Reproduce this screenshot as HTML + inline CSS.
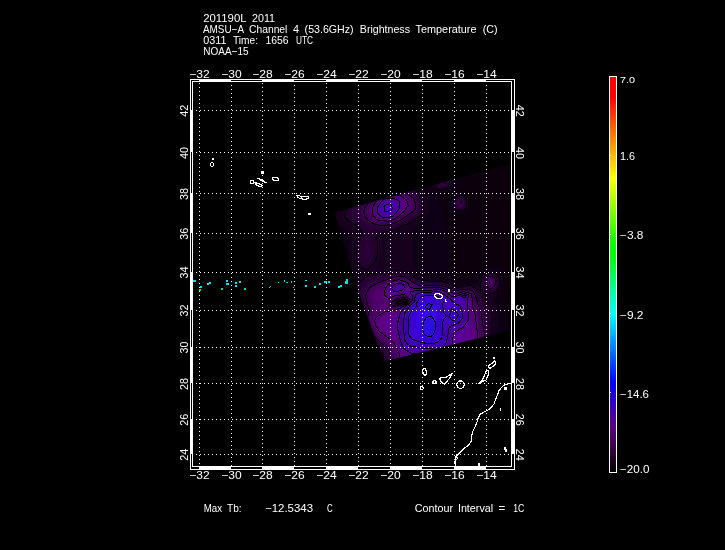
<!DOCTYPE html>
<html lang="en"><head><meta charset="utf-8"><title>AMSU-A Channel 4 Brightness Temperature</title>
<style>html,body{margin:0;padding:0;background:#000;overflow:hidden}svg{display:block;will-change:transform}text{font-family:"Liberation Sans",sans-serif;fill:#fff}</style></head><body>
<svg width="725" height="550" viewBox="0 0 725 550">
<rect width="725" height="550" fill="#000"/>
<defs><clipPath id="sw"><polygon points="510.5,163.5 510.5,330.5 383.5,361.5 357.5,288.5 334.5,212.5"/></clipPath><filter id="bl" x="-5%" y="-5%" width="110%" height="110%"><feGaussianBlur stdDeviation="1.1"/></filter></defs>
<g clip-path="url(#sw)"><g filter="url(#bl)" fill-rule="evenodd"><path fill="rgb(1,0,1)" d="M403.9 301.5L402.9 301.5ZM359.5 341.2L360.5 341.3L366.5 344.1L369.6 347.5L371.0 352.5L371.5 353.0L373.5 352.5L374.5 352.6L375.8 355.5L378.0 364.5L377.5 366.4L374.8 371.5L375.7 376.5L375.5 378.3L371.5 382.0L364.5 380.4L361.5 377.1L357.5 374.6L355.4 372.5L352.8 365.5L351.6 360.5L351.9 354.5L354.5 346.5L355.5 345.4L357.9 344.5L358.5 342.5Z"/><path fill="rgb(3,0,4)" d="M402.3 301.5L403.5 301.2L404.3 301.5ZM402.9 301.5L403.9 301.5ZM399.3 302.5L400.7 302.5ZM359.5 338.7L365.5 342.1L371.9 348.5L372.5 350.2L373.5 350.3L375.7 353.5L377.3 358.5L378.6 364.5L375.6 372.5L376.3 376.5L376.6 381.5L372.5 385.7L365.5 383.6L356.8 378.5L353.7 374.5L350.2 366.5L349.2 361.5L349.2 352.5L350.8 349.5L352.0 345.5L354.6 342.5ZM359.5 341.2L358.5 342.5L357.9 344.5L355.5 345.4L354.5 346.5L351.9 354.5L351.6 360.5L352.8 365.5L355.4 372.5L357.5 374.6L361.5 377.1L364.5 380.4L371.5 382.0L375.5 378.3L375.7 376.5L374.8 371.5L377.5 366.4L378.0 364.5L375.8 355.5L374.5 352.6L373.5 352.5L371.5 353.0L371.0 352.5L369.6 347.5L366.5 344.1L360.5 341.3Z"/><path fill="rgb(5,0,6)" d="M401.7 301.5L403.5 301.0L404.6 301.5L403.5 301.8ZM402.3 301.5L404.3 301.5L403.5 301.2ZM399.1 302.5L400.5 302.1L401.1 302.5ZM399.3 302.5L400.7 302.5ZM354.0 338.5L358.5 336.3L365.5 340.9L367.5 343.7L373.9 349.5L376.8 354.5L378.9 362.5L378.5 367.5L376.3 372.5L377.4 380.5L378.2 381.5L383.5 384.8L384.5 385.0L391.6 383.5L389.5 387.3L388.5 388.3L378.5 390.3L372.5 390.2L369.5 389.1L364.5 388.5L355.5 382.1L351.6 378.5L347.4 371.5L345.4 364.5L344.7 358.5L345.1 354.5L348.8 345.5ZM359.5 338.7L354.6 342.5L352.0 345.5L350.8 349.5L349.2 352.5L349.2 361.5L350.2 366.5L353.7 374.5L356.8 378.5L365.5 383.6L372.5 385.7L376.6 381.5L376.3 376.5L375.6 372.5L378.6 364.5L377.3 358.5L375.7 353.5L373.5 350.3L372.5 350.2L371.9 348.5L365.5 342.1Z"/><path fill="rgb(7,0,9)" d="M398.8 302.5L399.5 301.9L404.5 300.7L404.8 301.5L399.5 303.0ZM401.7 301.5L403.5 301.8L404.6 301.5L403.5 301.0ZM399.1 302.5L401.1 302.5L400.5 302.1ZM332.8 352.5L334.5 351.3L336.5 345.9L338.5 344.7L341.6 340.5L344.5 338.5L347.5 335.4L352.5 332.9L357.5 332.7L359.6 335.5L364.5 338.9L368.0 343.5L373.5 348.3L376.9 353.5L379.4 361.5L379.0 367.5L377.1 373.5L378.0 379.5L378.7 380.5L384.5 384.1L398.5 381.4L401.5 381.4L406.5 383.3L416.5 382.3L419.0 381.5L419.2 383.5L415.0 388.5L414.6 390.5L408.3 395.5L404.8 399.5L344.7 399.5L341.5 396.8L338.5 396.0L338.0 395.5L335.8 389.5L334.3 387.5L331.1 378.5L330.0 372.5L329.6 366.5L331.6 359.5ZM354.0 338.5L348.8 345.5L345.1 354.5L344.7 358.5L345.4 364.5L347.4 371.5L351.6 378.5L355.5 382.1L364.5 388.5L369.5 389.1L372.5 390.2L378.5 390.3L388.5 388.3L389.5 387.3L391.6 383.5L384.5 385.0L383.5 384.8L378.2 381.5L377.4 380.5L376.3 372.5L378.5 367.5L378.9 362.5L376.8 354.5L373.9 349.5L367.5 343.7L365.5 340.9L358.5 336.3Z"/><path fill="rgb(9,0,12)" d="M320.5 150.5L514.5 150.5L514.5 399.5L404.8 399.5L408.3 395.5L414.6 390.5L415.0 388.5L419.2 383.5L419.0 381.5L416.5 382.3L406.5 383.3L401.5 381.4L398.5 381.4L384.5 384.1L378.7 380.5L378.0 379.5L377.1 373.5L379.0 367.5L379.4 361.5L376.9 353.5L373.5 348.3L368.0 343.5L364.5 338.9L359.6 335.5L357.5 332.7L352.5 332.9L347.5 335.4L344.5 338.5L341.6 340.5L338.5 344.7L336.5 345.9L334.5 351.3L332.8 352.5L331.6 359.5L329.6 366.5L330.8 377.5L332.2 382.5L334.3 387.5L335.8 389.5L338.0 395.5L338.5 396.0L341.5 396.8L344.7 399.5L320.5 399.5ZM347.4 180.5L339.5 188.8L333.1 197.5L329.1 201.5L327.9 204.5L325.0 207.5L321.8 217.5L321.7 223.5L324.2 234.5L326.0 250.5L328.1 260.5L330.6 268.5L336.5 282.8L342.1 300.5L350.3 320.5L356.5 327.6L360.1 333.5L364.5 337.2L368.1 342.5L374.4 348.5L377.8 353.5L379.3 357.5L380.1 361.5L379.5 367.9L378.1 373.5L378.9 378.5L384.5 383.0L385.5 383.0L391.5 381.7L394.5 381.6L411.5 378.1L412.5 377.5L425.5 375.2L477.5 361.8L488.8 357.5L491.2 355.5L496.5 353.4L497.5 350.2L500.1 346.5L500.5 342.0L503.1 338.5L503.7 335.5L505.6 331.5L505.9 322.5L505.2 312.5L501.6 297.5L501.7 296.5L502.8 295.5L503.0 294.5L502.7 291.5L503.5 289.7L505.1 288.5L505.7 287.5L504.5 281.5L504.4 278.5L501.5 269.8L496.5 267.2L491.5 266.4L490.5 265.8L486.5 266.7L480.5 269.7L476.5 271.1L475.5 274.6L471.5 277.6L467.5 279.1L461.5 280.2L458.5 279.9L452.9 276.5L451.6 272.5L449.6 271.5L451.1 256.5L450.2 241.5L447.6 228.5L443.8 216.5L440.1 201.5L439.8 196.5L447.5 193.8L449.5 192.7L456.6 190.5L457.1 189.5L456.8 185.5L459.7 182.5L459.1 179.5L453.5 174.9L446.5 172.7L433.5 176.2L431.5 178.0L428.3 178.5L427.5 180.4L422.4 178.5L418.5 175.7L414.5 175.4L411.5 173.6L407.5 172.5L404.5 172.4L399.5 170.6L388.5 168.3L379.5 167.9L373.5 168.4L363.5 170.9L353.5 176.0ZM467.5 190.9L464.5 191.3L462.5 190.3L456.5 191.8L454.5 191.8L453.9 192.5L451.5 192.9L448.6 194.5L449.6 198.5L449.6 200.5L446.7 205.5L448.8 214.5L449.5 215.3L453.5 214.0L456.6 214.5L459.5 215.7L461.5 215.2L465.5 215.2L469.5 208.7L472.1 207.5L470.7 201.5L470.9 198.5L469.2 196.5ZM404.8 300.5L405.0 301.5L399.5 303.2L398.5 302.5L399.5 301.6ZM398.8 302.5L399.5 303.0L404.8 301.5L404.5 300.7L399.5 301.9Z"/><path fill="rgb(14,0,18)" d="M347.4 180.5L353.5 176.0L363.5 170.9L373.5 168.4L379.5 167.9L388.5 168.3L399.5 170.6L404.5 172.4L407.5 172.5L411.5 173.6L414.5 175.4L418.5 175.7L422.4 178.5L427.5 180.4L428.3 178.5L431.5 178.0L433.5 176.2L446.5 172.7L453.5 174.9L459.1 179.5L459.7 182.5L456.8 185.5L457.1 189.5L456.6 190.5L449.5 192.7L447.5 193.8L439.8 196.5L440.1 201.5L443.8 216.5L447.6 228.5L450.2 241.5L451.1 256.5L449.6 271.5L451.6 272.5L452.9 276.5L458.5 279.9L461.5 280.2L467.5 279.1L471.5 277.6L475.5 274.6L476.5 271.1L480.5 269.7L486.5 266.7L490.5 265.8L491.5 266.4L496.5 267.2L501.5 269.8L504.4 278.5L504.5 281.5L505.7 287.5L505.1 288.5L503.5 289.7L502.7 291.5L503.0 294.5L502.8 295.5L501.7 296.5L501.6 297.5L505.2 312.5L505.9 322.5L505.6 331.5L503.7 335.5L503.1 338.5L500.5 342.0L500.1 346.5L497.5 350.2L496.5 353.4L491.2 355.5L488.8 357.5L477.5 361.8L425.5 375.2L412.5 377.5L411.5 378.1L394.5 381.6L391.5 381.7L385.5 383.0L384.5 383.0L378.9 378.5L378.1 373.5L379.5 367.9L380.1 361.5L379.3 357.5L377.8 353.5L374.4 348.5L368.1 342.5L364.5 337.2L360.1 333.5L356.5 327.6L350.3 320.5L342.1 300.5L336.5 282.8L330.6 268.5L328.1 260.5L326.0 250.5L324.2 234.5L321.7 223.5L321.8 217.5L325.0 207.5L327.9 204.5L329.1 201.5L333.1 197.5L339.5 188.8ZM453.4 177.5L445.5 175.5L442.5 176.3L437.5 178.8L436.1 180.5L434.5 181.3L431.2 187.5L439.5 193.7L447.5 191.3L452.2 186.5L454.8 181.5L455.0 180.5ZM402.5 181.2L383.5 182.6L369.7 188.5L366.5 190.5L360.5 192.7L356.5 195.2L353.8 197.5L345.5 202.1L337.4 209.5L335.0 214.5L334.5 217.5L334.5 219.5L338.0 224.5L343.5 227.9L349.3 232.5L350.5 237.5L350.1 242.5L348.5 247.5L348.6 256.5L350.1 265.5L353.0 276.5L352.0 281.5L350.8 283.5L350.5 286.7L349.2 291.5L350.5 300.5L354.9 314.5L355.4 317.5L359.1 326.5L369.0 341.5L376.0 348.5L379.4 353.5L381.0 357.5L381.3 363.5L380.4 369.5L380.2 375.5L383.9 379.5L386.5 381.0L389.5 380.4L395.5 380.3L415.5 375.8L467.5 361.7L486.5 356.0L489.5 353.3L493.7 351.5L494.9 343.5L494.8 341.5L496.9 331.5L498.5 327.5L499.3 319.5L498.4 310.5L495.1 298.5L496.7 296.5L499.3 291.5L501.5 289.5L501.3 285.5L502.3 279.5L500.1 273.5L495.6 270.5L491.5 268.6L486.5 269.4L485.5 270.0L481.7 274.5L477.5 282.9L475.5 283.8L471.5 283.3L461.5 285.0L456.5 284.7L449.5 281.1L446.5 280.5L443.5 279.2L442.4 279.5L437.5 278.0L428.8 277.5L427.5 276.2L421.5 275.1L419.8 274.5L418.9 273.5L416.9 269.5L416.1 266.5L414.1 264.5L412.9 261.5L413.8 248.5L412.3 237.5L412.4 232.5L412.9 231.5L419.0 226.5L421.1 223.5L425.5 220.5L426.6 216.5L429.1 213.5L429.4 204.5L428.7 200.5L426.7 194.5L423.5 189.5L414.5 182.9L408.5 182.7ZM467.5 190.9L469.2 196.5L470.9 198.5L470.7 201.5L472.1 207.5L469.5 208.7L465.5 215.2L461.5 215.2L459.5 215.7L456.6 214.5L453.5 214.0L449.5 215.3L448.8 214.5L446.7 205.5L449.6 200.5L449.6 198.5L448.6 194.5L451.5 192.9L453.9 192.5L454.5 191.8L456.5 191.8L462.5 190.3L464.5 191.3ZM462.5 192.2L455.9 193.5L451.1 195.5L451.7 199.5L451.3 204.5L452.2 208.5L454.5 213.0L463.5 212.0L468.0 209.5L468.0 204.5L469.5 199.5L468.8 198.5L464.2 194.5ZM405.6 300.5L405.5 301.5L404.5 302.1L400.5 303.4L398.5 303.4L397.9 302.5L399.5 301.1L404.5 299.9ZM404.8 300.5L399.5 301.6L398.5 302.5L399.5 303.2L405.0 301.5Z"/><path fill="rgb(22,0,28)" d="M453.4 177.5L455.0 180.5L454.8 181.5L452.2 186.5L447.5 191.3L439.5 193.7L431.2 187.5L434.5 181.3L436.1 180.5L437.5 178.8L442.5 176.3L445.5 175.5ZM452.5 179.2L448.5 177.9L443.5 178.3L435.5 182.1L434.3 186.5L437.5 190.2L441.5 190.5L446.5 189.4L450.8 186.5L453.3 181.5ZM402.5 181.2L408.5 182.7L414.5 182.9L423.5 189.5L426.7 194.5L428.7 200.5L429.4 204.5L429.1 213.5L426.6 216.5L425.5 220.5L421.1 223.5L419.0 226.5L412.9 231.5L412.4 232.5L412.3 237.5L413.8 248.5L412.9 261.5L414.1 264.5L416.1 266.5L416.9 269.5L418.9 273.5L419.8 274.5L421.5 275.1L427.5 276.2L428.8 277.5L437.5 278.0L442.4 279.5L443.5 279.2L446.5 280.5L449.5 281.1L456.5 284.7L461.5 285.0L471.5 283.3L475.5 283.8L477.5 282.9L481.7 274.5L485.5 270.0L486.5 269.4L491.5 268.6L495.6 270.5L500.1 273.5L502.3 279.5L501.3 285.5L501.5 289.5L499.3 291.5L496.7 296.5L495.1 298.5L498.4 310.5L499.3 319.5L498.5 327.5L496.9 331.5L494.8 341.5L494.9 343.5L493.7 351.5L489.5 353.3L486.5 356.0L467.5 361.7L415.5 375.8L395.5 380.3L389.5 380.4L386.5 381.0L383.9 379.5L380.2 375.5L380.4 369.5L381.3 363.5L381.0 357.5L379.4 353.5L376.0 348.5L369.0 341.5L359.1 326.5L355.4 317.5L354.9 314.5L350.5 300.5L349.2 291.5L350.5 286.7L350.8 283.5L352.0 281.5L353.0 276.5L350.1 265.5L348.6 256.5L348.5 247.5L350.1 242.5L350.5 237.5L349.3 232.5L343.5 227.9L338.0 224.5L334.5 219.5L334.5 217.5L335.0 214.5L337.4 209.5L345.5 202.1L353.8 197.5L356.5 195.2L360.5 192.7L366.5 190.5L369.7 188.5L383.5 182.6ZM345.5 208.1L341.9 212.5L341.0 217.5L341.4 218.5L345.3 222.5L347.5 224.1L351.5 225.7L357.2 230.5L358.1 235.5L356.7 238.5L353.8 250.5L354.1 258.5L355.5 264.5L360.4 272.5L360.9 274.5L358.3 280.5L356.4 282.5L353.5 289.5L354.1 298.5L358.5 313.9L360.0 321.5L363.2 329.5L365.8 334.5L369.5 339.9L376.5 347.5L380.5 352.5L382.5 357.5L382.5 363.5L381.8 368.5L381.6 374.5L382.5 375.5L387.5 379.1L395.5 379.1L406.5 377.0L426.5 372.0L479.5 357.4L485.5 355.3L490.6 350.5L491.3 349.5L492.9 343.5L492.3 333.5L493.6 327.5L495.0 316.5L494.1 310.5L491.5 302.7L490.2 300.5L490.3 299.5L494.6 293.5L499.9 289.5L500.2 288.5L500.3 280.5L498.5 275.5L493.5 271.7L491.5 270.7L487.1 271.5L483.0 274.5L479.8 281.5L479.5 287.3L478.0 286.5L473.5 285.9L471.5 284.5L456.5 286.9L442.6 280.5L436.5 280.8L422.5 279.2L414.4 275.5L408.5 270.1L395.5 267.3L393.5 267.2L378.5 269.8L376.8 269.5L377.6 267.5L377.1 264.5L380.4 256.5L380.7 253.5L382.1 248.5L381.3 239.5L382.0 237.5L386.5 233.6L391.5 232.6L395.5 231.2L415.4 222.5L421.0 217.5L424.7 211.5L425.9 205.5L425.7 203.5L424.1 197.5L421.5 192.7L418.5 190.1L412.5 186.5L406.5 185.0L388.5 184.3L384.5 185.0L378.5 187.1L376.5 188.6L372.1 190.5L368.6 193.5L356.5 199.4ZM462.5 192.2L464.2 194.5L468.8 198.5L469.5 199.5L468.0 204.5L468.0 209.5L463.5 212.0L454.5 213.0L452.2 208.5L451.3 204.5L451.7 199.5L451.1 195.5L455.9 193.5ZM461.5 193.9L457.5 194.6L453.5 197.2L453.5 199.5L452.3 204.5L453.4 208.5L455.5 211.9L463.5 210.8L466.3 209.5L467.1 208.5L466.9 204.5L467.9 199.5L462.7 195.5ZM406.1 300.5L405.5 301.8L400.5 303.8L396.3 303.5L399.5 300.6L404.5 299.5ZM405.6 300.5L404.5 299.9L399.5 301.1L397.9 302.5L398.5 303.4L400.5 303.4L404.5 302.1L405.5 301.5Z"/><path fill="rgb(30,0,38)" d="M452.5 179.2L453.3 181.5L450.8 186.5L446.5 189.4L441.5 190.5L437.5 190.2L434.3 186.5L435.5 182.1L443.5 178.3L448.5 177.9ZM451.5 180.7L447.5 178.8L443.5 179.5L436.5 183.0L435.9 185.5L436.1 186.5L437.5 188.6L438.5 188.9L441.5 188.9L446.5 187.9L450.0 185.5L451.9 181.5ZM345.5 208.1L356.5 199.4L368.6 193.5L372.1 190.5L376.5 188.6L378.5 187.1L384.5 185.0L388.5 184.3L406.5 185.0L412.5 186.5L418.5 190.1L421.5 192.7L424.1 197.5L425.7 203.5L425.9 205.5L424.7 211.5L421.0 217.5L415.4 222.5L395.5 231.2L391.5 232.6L386.5 233.6L382.0 237.5L381.3 239.5L382.1 248.5L380.7 253.5L380.4 256.5L377.1 264.5L377.6 267.5L376.8 269.5L378.5 269.8L393.5 267.2L395.5 267.3L408.5 270.1L414.4 275.5L422.5 279.2L436.5 280.8L442.6 280.5L456.5 286.9L471.5 284.5L473.5 285.9L478.0 286.5L479.5 287.3L479.8 281.5L483.0 274.5L487.1 271.5L491.5 270.7L493.5 271.7L498.5 275.5L500.3 280.5L500.2 288.5L499.9 289.5L494.6 293.5L490.3 299.5L490.2 300.5L491.5 302.7L494.1 310.5L495.0 316.5L493.6 327.5L492.3 333.5L492.9 343.5L491.3 349.5L490.6 350.5L485.5 355.3L479.5 357.4L426.5 372.0L406.5 377.0L395.5 379.1L387.5 379.1L382.5 375.5L381.6 374.5L381.8 368.5L382.5 363.5L382.5 357.5L380.5 352.5L376.5 347.5L369.5 339.9L365.8 334.5L363.2 329.5L360.0 321.5L358.5 313.9L354.1 298.5L353.5 289.5L356.4 282.5L358.3 280.5L360.9 274.5L360.4 272.5L355.5 264.5L354.1 258.5L353.8 250.5L356.7 238.5L358.1 235.5L357.2 230.5L351.5 225.7L347.5 224.1L345.3 222.5L341.4 218.5L341.0 217.5L341.9 212.5ZM416.5 191.2L411.5 188.1L400.5 186.2L393.5 186.6L386.5 186.3L384.5 186.7L379.5 188.6L373.5 192.7L366.5 196.2L355.5 203.9L348.0 210.5L346.3 215.5L346.5 216.9L350.4 220.5L356.9 224.5L359.5 227.2L361.5 228.5L364.9 233.5L359.1 244.5L357.4 252.5L357.9 258.5L359.9 263.5L361.5 265.3L363.5 266.4L367.5 266.3L371.5 263.0L373.4 260.5L375.9 253.5L376.4 247.5L374.8 238.5L374.0 236.5L375.4 234.5L376.5 234.5L381.6 231.5L390.5 230.3L395.5 228.9L402.6 225.5L405.7 223.5L415.5 219.0L420.5 214.4L422.9 210.5L423.0 205.5L422.4 201.5L420.5 196.5ZM359.1 284.5L356.4 291.5L356.5 297.5L360.8 313.5L361.2 320.5L364.2 328.5L367.9 335.5L382.1 352.5L384.0 357.5L383.8 363.5L382.9 368.5L383.2 374.5L387.5 377.6L396.5 377.9L406.5 376.1L466.5 360.3L479.5 356.5L484.5 354.5L489.8 349.5L491.1 344.5L490.3 326.5L491.2 316.5L490.2 310.5L488.3 305.5L481.5 294.8L479.9 291.5L470.5 285.8L468.5 286.2L466.5 285.8L457.5 287.6L455.5 287.5L442.5 281.5L431.5 282.1L425.5 280.8L421.5 280.7L415.5 278.3L407.5 272.8L405.7 272.5L400.5 270.4L389.5 271.9L370.5 275.9L365.5 278.6L360.5 282.8ZM492.5 272.3L487.5 273.0L483.5 275.3L481.1 282.5L481.4 290.5L486.5 293.4L490.5 292.8L492.5 293.1L498.9 288.5L499.4 280.5L497.5 275.5ZM461.5 193.9L462.7 195.5L467.9 199.5L466.9 204.5L467.1 208.5L466.3 209.5L463.5 210.8L455.5 211.9L453.4 208.5L452.3 204.5L453.5 199.5L453.5 197.2L457.5 194.6ZM455.5 197.8L454.5 199.2L453.2 203.5L454.2 207.5L456.1 210.5L463.5 209.8L465.9 208.5L466.4 200.5L465.8 199.5L460.5 195.6L458.5 196.0ZM406.6 300.5L405.5 302.2L400.5 304.2L396.5 303.9L395.6 303.5L399.5 300.1L404.5 299.1ZM406.1 300.5L404.5 299.5L399.5 300.6L396.3 303.5L400.5 303.8L405.5 301.8Z"/><path fill="rgb(38,0,48)" d="M451.5 180.7L451.9 181.5L450.0 185.5L446.5 187.9L441.5 188.9L438.5 188.9L437.5 188.6L436.1 186.5L435.9 185.5L436.5 183.0L443.5 179.5L447.5 178.8ZM449.7 181.5L447.5 180.0L444.5 180.1L437.6 183.5L437.2 185.5L438.5 187.6L446.5 186.8L448.7 185.5L450.2 182.5ZM416.5 191.2L420.5 196.5L422.4 201.5L423.0 205.5L422.9 210.5L420.5 214.4L415.5 219.0L405.7 223.5L402.6 225.5L395.5 228.9L390.5 230.3L381.6 231.5L376.5 234.5L375.4 234.5L374.0 236.5L374.8 238.5L376.4 247.5L375.9 253.5L373.4 260.5L371.5 263.0L367.5 266.3L363.5 266.4L361.5 265.3L359.9 263.5L357.9 258.5L357.4 252.5L359.1 244.5L364.9 233.5L361.5 228.5L359.5 227.2L356.9 224.5L350.4 220.5L346.5 216.9L346.3 215.5L348.0 210.5L355.5 203.9L366.5 196.2L373.5 192.7L379.5 188.6L384.5 186.7L386.5 186.3L393.5 186.6L400.5 186.2L411.5 188.1ZM421.2 204.5L420.6 201.5L418.6 196.5L414.5 192.2L411.5 189.8L399.5 187.3L385.5 188.2L380.5 190.0L375.6 192.5L372.5 195.0L368.5 197.0L361.5 202.1L353.9 208.5L351.2 214.5L351.3 215.5L355.3 219.5L368.5 228.8L369.5 228.6L374.5 229.8L390.5 228.5L395.5 226.9L401.3 223.5L414.7 217.5L418.6 213.5L421.1 209.5ZM367.5 242.0L366.1 242.5L363.6 245.5L361.9 248.5L361.2 251.5L361.8 256.5L365.5 260.5L370.5 256.5L371.3 254.5L371.9 248.5L370.7 244.5L368.5 242.2ZM460.5 195.6L465.8 199.5L466.4 200.5L465.9 208.5L463.5 209.8L456.5 210.7L454.2 207.5L453.2 203.5L454.5 199.2L455.5 197.8L458.5 196.0ZM455.5 199.4L454.0 203.5L454.5 205.7L456.5 209.0L457.5 209.4L461.5 209.1L464.5 208.2L465.1 207.5L465.4 200.5L460.5 197.1L459.5 197.2ZM359.1 284.5L360.5 282.8L365.5 278.6L370.5 275.9L389.5 271.9L400.5 270.4L405.7 272.5L407.5 272.8L415.5 278.3L421.5 280.7L425.5 280.8L431.5 282.1L442.5 281.5L455.5 287.5L457.5 287.6L466.5 285.8L468.5 286.2L470.5 285.8L479.9 291.5L481.5 294.8L488.3 305.5L490.2 310.5L491.2 316.5L490.3 326.5L491.1 344.5L489.8 349.5L484.5 354.5L479.5 356.5L466.5 360.3L406.5 376.1L396.5 377.9L387.5 377.6L383.2 374.5L382.9 368.5L383.8 363.5L384.0 357.5L382.1 352.5L367.9 335.5L364.2 328.5L361.2 320.5L360.8 313.5L356.5 297.5L356.4 291.5ZM361.5 286.0L359.0 291.5L358.8 296.5L360.0 302.5L362.9 312.5L362.5 318.5L362.8 321.5L365.5 328.5L368.8 334.5L373.2 340.5L379.8 347.5L383.7 352.5L385.4 357.5L385.3 362.5L384.2 368.5L384.5 373.5L385.1 374.5L388.3 376.5L392.5 376.9L397.5 376.6L407.5 374.9L467.5 359.1L482.5 354.3L486.3 351.5L488.9 348.5L489.4 344.5L488.0 317.5L486.9 311.5L485.1 306.5L478.5 292.6L474.5 289.7L473.5 288.3L469.5 287.1L468.5 287.4L465.5 286.6L457.5 288.2L454.5 288.1L451.9 287.5L441.5 282.6L428.5 283.1L421.5 282.0L416.0 280.5L409.5 275.9L407.5 274.0L402.9 273.5L399.5 272.3L389.5 273.7L370.5 279.1L365.8 281.5ZM492.5 272.3L497.5 275.5L499.4 280.5L498.9 288.5L492.5 293.1L490.5 292.8L486.5 293.4L481.4 290.5L481.1 282.5L483.5 275.3L487.5 273.0ZM487.5 273.9L484.5 275.6L482.3 284.5L482.5 287.5L483.0 288.5L485.5 290.4L491.5 292.0L492.5 291.9L497.7 287.5L497.8 284.5L498.6 280.5L497.5 277.2L496.5 275.8L492.5 273.2ZM407.0 300.5L405.5 302.6L400.5 304.6L396.5 304.3L394.8 303.5L399.5 299.6L404.5 298.8ZM406.6 300.5L404.5 299.1L399.5 300.1L395.6 303.5L396.5 303.9L400.5 304.2L405.5 302.2Z"/><path fill="rgb(44,0,57)" d="M449.7 181.5L450.2 182.5L448.7 185.5L446.5 186.8L438.5 187.6L437.2 185.5L437.6 183.5L444.5 180.1L447.5 180.0ZM448.9 182.5L446.5 180.9L444.5 181.1L439.5 183.7L438.6 184.5L438.6 185.5L439.5 186.4L445.5 186.1L447.5 185.0ZM421.2 204.5L421.1 209.5L418.6 213.5L414.7 217.5L401.3 223.5L395.5 226.9L390.5 228.5L374.5 229.8L369.5 228.6L368.5 228.8L355.3 219.5L351.3 215.5L351.2 214.5L353.9 208.5L361.5 202.1L368.5 197.0L372.5 195.0L375.6 192.5L380.5 190.0L385.5 188.2L399.5 187.3L411.5 189.8L414.5 192.2L418.6 196.5L420.6 201.5ZM419.4 203.5L418.5 200.3L416.5 196.5L410.5 191.0L398.5 188.4L393.5 188.4L385.5 189.4L380.5 191.1L376.5 193.1L371.5 197.3L363.5 202.7L358.3 207.5L355.7 213.5L355.9 214.5L359.2 218.5L363.6 222.5L370.3 226.5L373.5 227.4L375.5 227.3L380.5 228.2L389.5 226.9L395.5 225.1L403.4 221.5L405.5 220.1L411.5 217.5L414.5 215.6L417.5 212.5L419.4 208.5ZM460.5 197.1L465.4 200.5L465.1 207.5L463.5 208.8L457.5 209.4L456.5 209.0L455.0 206.5L454.0 203.5L455.5 199.4L459.5 197.2ZM455.5 201.1L454.9 203.5L457.5 208.1L461.5 208.1L463.8 207.5L464.2 200.5L460.5 198.1ZM367.5 242.0L368.5 242.2L370.7 244.5L371.9 248.5L371.3 254.5L370.5 256.5L365.5 260.5L361.8 256.5L361.2 251.5L361.9 248.5L363.6 245.5L366.1 242.5ZM361.5 286.0L365.8 281.5L370.5 279.1L389.5 273.7L399.5 272.3L402.9 273.5L407.5 274.0L409.5 275.9L416.0 280.5L421.5 282.0L428.5 283.1L441.5 282.6L451.9 287.5L454.5 288.1L457.5 288.2L465.5 286.6L468.5 287.4L469.5 287.1L473.5 288.3L474.5 289.7L478.5 292.6L485.1 306.5L486.9 311.5L488.0 317.5L489.4 344.5L488.9 348.5L486.3 351.5L482.5 354.3L467.5 359.1L407.5 374.9L397.5 376.6L392.5 376.9L388.3 376.5L385.1 374.5L384.5 373.5L384.2 368.5L385.3 362.5L385.4 357.5L383.7 352.5L379.8 347.5L373.2 340.5L368.8 334.5L365.5 328.5L362.8 321.5L362.5 318.5L362.9 312.5L360.0 302.5L358.8 296.5L359.0 291.5ZM362.0 289.5L360.9 293.5L360.9 296.5L364.8 311.5L364.1 317.5L364.5 322.6L366.9 328.5L372.2 337.5L384.8 351.5L386.7 356.5L386.7 362.5L385.7 368.5L385.9 373.5L388.5 375.1L393.5 375.8L407.5 373.9L424.5 369.8L466.8 358.5L477.5 355.3L481.7 353.5L485.5 350.5L487.8 347.5L488.1 344.5L486.6 323.5L485.0 312.5L483.4 307.5L478.1 295.5L476.3 292.5L473.5 289.3L465.5 287.4L457.5 288.8L452.5 288.6L445.5 285.1L441.5 283.7L427.5 283.9L422.5 283.6L415.5 281.6L409.4 277.5L406.5 274.7L397.5 274.2L390.5 275.3L370.5 281.5L366.5 284.0L363.7 286.5ZM492.5 273.2L496.5 275.8L497.5 277.2L498.6 280.5L497.8 284.5L497.7 287.5L492.5 291.9L491.5 292.0L485.5 290.4L483.0 288.5L482.5 287.5L482.3 284.5L484.5 275.6L487.5 273.9ZM492.5 274.1L487.5 274.8L485.0 276.5L483.7 284.5L483.9 285.5L486.5 289.4L491.5 291.1L496.1 287.5L497.8 281.5L497.2 278.5L496.0 276.5ZM407.4 300.5L405.5 302.9L402.5 303.9L400.5 305.0L395.5 304.6L394.5 304.9L393.7 304.5L393.5 303.8L398.5 299.5L404.5 298.4ZM407.0 300.5L404.5 298.8L399.5 299.6L394.8 303.5L396.5 304.3L400.5 304.6L405.5 302.6Z"/><path fill="rgb(51,0,67)" d="M448.9 182.5L447.5 185.0L445.5 186.1L439.5 186.4L438.6 185.5L438.6 184.5L439.5 183.7L444.5 181.1L446.5 180.9ZM447.1 182.5L445.5 181.9L444.5 182.1L440.4 184.5L441.5 185.1L445.5 185.1L446.6 184.5L447.2 183.5ZM419.4 203.5L419.4 208.5L417.5 212.5L414.5 215.6L411.5 217.5L405.5 220.1L403.4 221.5L395.5 225.1L389.5 226.9L380.5 228.2L375.5 227.3L373.5 227.4L370.3 226.5L363.6 222.5L359.2 218.5L355.9 214.5L355.7 213.5L358.3 207.5L363.5 202.7L371.5 197.3L376.5 193.1L380.5 191.1L385.5 189.4L393.5 188.4L398.5 188.4L410.5 191.0L416.5 196.5L418.5 200.3ZM417.2 201.5L415.3 197.5L409.5 192.2L397.5 189.6L393.5 189.3L385.5 190.2L377.5 193.4L371.5 198.7L367.5 201.4L362.3 206.5L359.6 212.5L359.7 213.5L362.0 217.5L366.1 221.5L373.5 225.6L381.5 227.0L389.5 225.9L394.5 224.5L402.5 220.7L404.5 219.1L410.5 216.2L414.5 213.5L416.5 211.4L417.5 208.5L417.7 203.5ZM460.5 198.1L464.2 200.5L463.8 207.5L461.5 208.1L457.5 208.1L455.2 204.5L455.1 202.5L455.5 201.1ZM456.0 202.5L456.5 204.5L460.5 206.6L462.5 206.9L463.0 206.5L463.2 201.5L461.5 199.8L460.5 199.4ZM362.0 289.5L363.7 286.5L366.5 284.0L370.5 281.5L390.5 275.3L397.5 274.2L406.5 274.7L409.4 277.5L415.5 281.6L422.5 283.6L427.5 283.9L441.5 283.7L445.5 285.1L452.5 288.6L457.5 288.8L465.5 287.4L473.5 289.3L476.3 292.5L478.1 295.5L483.4 307.5L485.0 312.5L486.6 323.5L488.1 344.5L487.8 347.5L485.5 350.5L481.7 353.5L477.5 355.3L466.8 358.5L424.5 369.8L407.5 373.9L393.5 375.8L388.5 375.1L385.9 373.5L385.7 368.5L386.7 362.5L386.7 356.5L384.8 351.5L372.2 337.5L366.9 328.5L364.5 322.6L364.1 317.5L364.8 311.5L360.9 296.5L360.9 293.5ZM364.4 289.5L362.9 295.5L363.9 301.5L366.9 311.5L365.6 317.5L366.2 323.5L370.3 332.5L373.6 337.5L376.5 341.0L382.5 346.5L386.6 351.5L388.3 356.5L388.2 361.5L387.2 367.5L387.7 372.5L389.5 374.1L394.5 374.7L408.5 372.8L423.5 369.2L465.5 358.0L476.5 354.7L480.5 352.9L486.5 347.5L486.9 345.5L486.6 339.5L484.4 318.5L483.4 313.5L481.5 307.5L475.0 292.5L472.5 289.5L468.5 289.2L464.5 288.2L457.5 289.5L452.5 289.3L445.5 285.7L440.5 284.6L433.5 284.3L424.5 284.8L421.0 284.5L416.5 283.2L410.5 279.5L406.5 275.9L401.5 275.1L393.5 276.2L372.5 282.9L365.6 287.5ZM492.5 274.1L496.0 276.5L497.2 278.5L497.8 281.5L496.1 287.5L491.5 291.1L486.5 289.4L483.9 285.5L483.7 284.5L485.0 276.5L487.5 274.8ZM489.5 275.2L486.1 276.5L485.5 278.5L484.8 284.5L486.9 288.5L491.5 290.1L495.6 286.5L497.2 281.5L496.3 278.5L493.6 275.5L492.5 275.1ZM407.7 300.5L405.5 303.2L402.5 304.2L400.5 305.5L396.5 305.1L393.5 305.7L392.6 304.5L392.6 303.5L393.5 302.5L396.5 300.8L398.5 298.9L404.5 298.1ZM407.4 300.5L404.5 298.4L398.5 299.5L393.5 303.8L393.7 304.5L394.5 304.9L395.5 304.6L400.5 305.0L402.5 303.9L405.5 302.9Z"/><path fill="rgb(58,0,76)" d="M447.1 182.5L447.2 183.5L446.6 184.5L445.5 185.1L441.5 185.1L440.4 184.5L444.5 182.1L445.5 181.9ZM443.9 183.5L445.5 184.0L446.0 183.5L445.5 183.0ZM417.2 201.5L417.7 203.5L417.5 208.5L416.5 211.4L414.5 213.5L410.5 216.2L404.5 219.1L402.5 220.7L394.5 224.5L389.5 225.9L381.5 227.0L373.5 225.6L366.1 221.5L362.0 217.5L359.7 213.5L359.6 212.5L362.3 206.5L367.5 201.4L371.5 198.7L377.5 193.4L385.5 190.2L393.5 189.3L397.5 189.6L409.5 192.2L415.3 197.5ZM413.5 197.5L408.6 193.5L401.5 191.3L393.5 190.4L385.5 191.1L378.5 193.9L371.5 200.2L369.3 201.5L364.3 207.5L363.0 211.5L363.1 212.5L364.7 216.5L368.5 221.3L373.5 224.4L381.5 225.9L389.5 225.1L394.5 223.6L401.5 220.0L404.5 217.7L408.9 215.5L415.4 210.5L416.0 208.5L416.0 202.5ZM456.0 202.5L460.5 199.4L461.5 199.8L463.2 201.5L463.0 206.5L462.5 206.9L460.5 206.6L456.5 204.5ZM460.5 200.9L458.8 202.5L461.5 203.9L462.1 201.5L461.5 200.8ZM364.4 289.5L365.6 287.5L372.5 282.9L393.5 276.2L401.5 275.1L406.5 275.9L410.5 279.5L416.5 283.2L421.0 284.5L424.5 284.8L433.5 284.3L440.5 284.6L445.5 285.7L452.5 289.3L457.5 289.5L464.5 288.2L468.5 289.2L472.5 289.5L475.0 292.5L481.5 307.5L483.4 313.5L484.4 318.5L486.6 339.5L486.9 345.5L486.5 347.5L480.5 352.9L476.5 354.7L465.5 358.0L423.5 369.2L408.5 372.8L394.5 374.7L389.5 374.1L387.7 372.5L387.2 367.5L388.2 361.5L388.3 356.5L386.6 351.5L382.5 346.5L376.5 341.0L373.6 337.5L370.3 332.5L366.2 323.5L365.6 317.5L366.9 311.5L363.9 301.5L362.9 295.5ZM365.0 295.5L365.7 300.5L368.8 310.5L367.3 316.5L367.5 323.3L370.6 330.5L375.0 337.5L384.4 346.5L388.0 350.5L389.9 355.5L389.9 361.5L388.7 367.5L389.6 372.5L390.5 373.0L395.5 373.6L409.5 371.7L464.5 357.4L475.5 354.1L480.5 351.7L485.5 346.5L485.4 339.5L481.6 313.5L474.7 293.5L472.5 290.2L464.5 288.9L457.5 290.1L452.5 289.9L445.5 286.3L434.5 285.0L420.2 285.5L417.5 284.8L413.3 282.5L405.5 276.5L401.5 275.8L393.5 277.1L384.5 280.1L382.5 281.3L372.5 285.0L367.5 288.5ZM489.5 275.2L492.5 275.1L493.6 275.5L496.3 278.5L497.2 281.5L495.6 286.5L491.5 290.1L486.9 288.5L484.8 284.5L485.5 278.5L486.1 276.5ZM488.5 276.3L486.6 277.5L485.6 284.5L487.5 287.8L491.5 289.0L495.5 285.0L496.5 281.5L496.3 280.5L493.5 276.3ZM408.0 300.5L405.5 303.6L402.5 304.5L400.5 305.8L397.2 305.5L393.5 306.5L392.5 305.9L391.7 304.5L391.7 302.5L396.5 300.1L398.5 298.3L403.5 297.5L407.3 299.5ZM407.7 300.5L404.5 298.1L398.5 298.9L396.5 300.8L393.5 302.5L392.6 303.5L392.6 304.5L393.5 305.7L396.5 305.1L400.5 305.5L402.5 304.2L405.5 303.2Z"/><path fill="rgb(65,0,86)" d="M443.9 183.5L445.5 183.0L446.0 183.5L445.5 184.0ZM416.0 202.5L416.0 208.5L415.4 210.5L408.9 215.5L404.5 217.7L401.5 220.0L394.5 223.6L389.5 225.1L381.5 225.9L373.5 224.4L368.5 221.3L364.7 216.5L363.1 212.5L363.0 211.5L364.3 207.5L369.3 201.5L371.5 200.2L378.5 193.9L385.5 191.1L393.5 190.4L401.5 191.3L408.6 193.5L413.5 197.5ZM412.6 198.5L407.8 194.5L400.5 192.0L392.5 191.3L386.5 191.8L379.2 194.5L370.1 202.5L368.5 204.5L365.5 210.5L366.9 216.5L370.4 220.5L374.5 223.5L382.5 224.8L389.5 224.2L394.5 222.7L400.1 219.5L403.5 216.9L408.2 214.5L414.1 209.5L414.7 203.5ZM460.5 200.9L461.5 200.8L462.1 201.5L461.5 203.9L458.8 202.5ZM367.5 288.5L372.5 285.0L382.5 281.3L384.5 280.1L393.5 277.1L401.5 275.8L405.5 276.5L413.3 282.5L417.5 284.8L420.2 285.5L434.5 285.0L445.5 286.3L452.5 289.9L457.5 290.1L464.5 288.9L472.5 290.2L474.7 293.5L481.6 313.5L485.4 339.5L485.5 346.5L480.5 351.7L475.5 354.1L464.5 357.4L409.5 371.7L395.5 373.6L390.5 373.0L389.6 372.5L388.7 367.5L389.9 361.5L389.9 355.5L388.0 350.5L384.4 346.5L375.0 337.5L370.6 330.5L367.5 323.3L367.3 316.5L368.8 310.5L365.7 300.5L365.0 295.5ZM368.5 291.5L367.4 294.5L367.8 298.5L371.3 310.5L369.0 315.5L368.5 322.5L370.5 327.8L375.5 336.2L385.8 345.5L389.9 350.5L391.7 355.5L391.5 362.8L390.5 366.5L391.6 371.5L392.5 372.0L395.5 372.5L409.5 370.8L465.5 356.2L474.5 353.4L479.5 351.0L484.1 346.5L484.3 340.5L481.0 317.5L478.6 308.5L475.7 300.5L475.2 296.5L474.0 293.5L472.5 291.1L464.5 289.8L457.5 290.7L452.5 290.6L445.5 286.9L439.5 286.1L428.5 285.6L417.5 286.0L411.5 282.5L408.5 279.7L405.5 277.9L400.5 276.6L393.5 277.8L390.5 279.5L385.5 281.0L382.5 282.9L372.5 287.2L369.9 289.5ZM488.5 276.3L493.5 276.3L496.3 280.5L496.5 281.5L495.5 285.0L491.5 289.0L487.5 287.8L485.6 284.5L486.6 277.5ZM488.5 277.2L487.5 277.9L486.5 284.5L487.5 286.6L490.5 288.0L491.5 287.6L494.6 284.5L495.9 281.5L495.5 280.4L493.5 277.9ZM408.3 300.5L405.5 303.8L403.3 304.5L400.5 306.2L397.5 306.1L392.5 307.3L390.8 304.5L390.8 302.5L391.5 301.6L394.2 300.5L398.5 297.8L403.5 297.0L407.8 299.5ZM408.0 300.5L407.3 299.5L403.5 297.5L398.5 298.3L396.5 300.1L391.7 302.5L391.7 304.5L392.5 305.9L393.5 306.5L397.2 305.5L400.5 305.8L402.5 304.5L405.5 303.6Z"/><path fill="rgb(71,0,94)" d="M412.6 198.5L414.7 203.5L414.1 209.5L408.2 214.5L403.5 216.9L400.1 219.5L394.5 222.7L389.5 224.2L382.5 224.8L374.5 223.5L370.4 220.5L366.9 216.5L365.5 210.5L368.5 204.5L370.1 202.5L379.2 194.5L386.5 191.8L392.5 191.3L400.5 192.0L407.8 194.5ZM411.0 198.5L405.5 194.6L400.5 192.9L392.5 192.3L386.5 192.6L381.5 194.3L376.5 198.1L370.3 204.5L367.8 210.5L368.6 215.5L372.4 220.5L375.5 222.5L382.5 223.5L388.5 223.4L394.5 221.7L403.5 215.6L406.5 214.2L412.2 209.5L412.8 208.5L413.3 203.5ZM368.5 291.5L369.9 289.5L372.5 287.2L382.5 282.9L385.5 281.0L390.5 279.5L393.5 277.8L400.5 276.6L405.5 277.9L408.5 279.7L411.5 282.5L417.5 286.0L428.5 285.6L439.5 286.1L445.5 286.9L452.5 290.6L457.5 290.7L464.5 289.8L472.5 291.1L474.0 293.5L475.2 296.5L475.7 300.5L478.6 308.5L481.0 317.5L484.3 340.5L484.1 346.5L479.5 351.0L474.5 353.4L465.5 356.2L409.5 370.8L395.5 372.5L392.5 372.0L391.6 371.5L390.5 366.5L391.5 362.8L391.7 355.5L389.9 350.5L385.8 345.5L375.5 336.2L370.5 327.8L368.5 322.5L369.0 315.5L371.3 310.5L367.8 298.5L367.4 294.5ZM370.3 293.5L369.9 294.5L370.3 299.5L374.0 309.5L370.5 316.5L369.9 322.5L371.6 327.5L374.5 332.8L382.5 341.0L385.5 342.9L388.2 345.5L391.5 349.5L393.6 355.5L392.7 366.5L394.4 370.5L395.5 371.3L401.5 371.1L412.5 369.2L465.5 355.3L475.5 351.9L479.9 349.5L482.6 346.5L483.0 340.5L479.4 316.5L477.3 308.5L474.8 301.5L474.5 296.5L473.3 293.5L471.5 291.3L463.5 290.4L458.5 291.3L453.5 291.4L451.0 290.5L446.5 287.8L439.5 286.6L428.5 286.2L416.5 286.6L410.9 283.5L407.5 280.0L404.5 278.4L400.5 277.3L393.5 278.6L390.5 280.5L386.5 281.9L383.5 284.2L373.5 289.5ZM488.5 277.2L493.5 277.9L495.5 280.4L495.9 281.5L494.6 284.5L491.5 287.6L490.5 288.0L487.5 286.6L486.5 284.5L487.5 277.9ZM488.5 278.3L487.1 283.5L487.3 284.5L488.5 286.2L490.5 287.0L494.5 283.0L495.0 281.5L494.5 280.5ZM408.3 299.5L408.6 300.5L405.5 304.1L400.5 306.5L398.5 306.4L392.5 308.1L390.1 305.5L389.9 301.5L398.5 297.2L403.5 296.5ZM408.3 300.5L407.8 299.5L403.5 297.0L398.5 297.8L394.2 300.5L391.5 301.6L390.8 302.5L390.8 304.5L392.5 307.3L397.5 306.1L400.5 306.2L403.3 304.5L405.5 303.8Z"/><path fill="rgb(77,0,103)" d="M411.0 198.5L413.3 203.5L412.8 208.5L412.2 209.5L406.5 214.2L403.5 215.6L394.5 221.7L388.5 223.4L382.5 223.5L375.5 222.5L372.4 220.5L368.6 215.5L367.8 210.5L370.3 204.5L376.5 198.1L381.5 194.3L386.5 192.6L392.5 192.3L400.5 192.9L405.5 194.6ZM409.8 199.5L404.4 195.5L399.5 193.6L391.5 193.1L386.5 193.4L381.5 195.2L376.5 199.1L372.0 204.5L369.4 210.5L370.4 215.5L374.5 220.7L375.5 221.4L379.5 222.5L388.5 222.6L393.5 221.2L405.5 213.4L410.1 209.5L411.2 207.5L411.8 204.5L411.8 203.5ZM370.3 293.5L373.5 289.5L383.5 284.2L386.5 281.9L390.5 280.5L393.5 278.6L400.5 277.3L404.5 278.4L407.5 280.0L410.9 283.5L416.5 286.6L428.5 286.2L439.5 286.6L446.5 287.8L451.0 290.5L453.5 291.4L458.5 291.3L463.5 290.4L471.5 291.3L473.3 293.5L474.5 296.5L474.8 301.5L477.3 308.5L479.4 316.5L483.0 340.5L482.6 346.5L479.9 349.5L475.5 351.9L465.5 355.3L412.5 369.2L401.5 371.1L395.5 371.3L394.4 370.5L392.7 366.5L393.6 355.5L391.5 349.5L388.2 345.5L385.5 342.9L382.5 341.0L374.5 332.8L371.6 327.5L369.9 322.5L370.5 316.5L374.0 309.5L370.3 299.5L369.9 294.5ZM374.2 292.5L373.7 298.5L376.0 304.5L378.2 308.5L374.5 313.0L372.1 317.5L371.0 321.5L372.5 326.5L376.3 332.5L381.5 338.1L389.5 344.1L393.7 349.5L395.5 354.5L395.8 357.5L394.7 365.5L396.5 369.0L397.5 370.0L401.5 370.2L410.5 368.8L446.5 359.7L472.5 352.2L479.5 348.6L480.6 347.5L481.6 341.5L478.6 319.5L476.3 309.5L474.0 302.5L473.4 295.5L471.5 292.0L463.5 290.8L457.5 292.0L453.5 292.1L450.5 290.9L446.5 288.4L440.5 287.0L429.5 286.8L415.5 287.2L410.5 284.7L407.5 280.9L400.5 278.1L393.5 279.4L387.5 282.8L382.5 287.3ZM488.5 278.3L494.5 280.5L495.0 281.5L494.5 283.0L490.5 287.0L488.5 286.2L487.3 284.5L487.1 283.5ZM489.5 280.1L488.5 280.4L487.8 283.5L488.5 285.1L490.5 285.8L493.6 282.5L492.8 281.5ZM408.9 299.5L408.9 300.5L405.5 304.4L400.5 306.9L398.5 307.1L395.5 308.3L391.5 308.8L389.5 306.3L387.8 305.5L388.6 304.5L388.9 301.5L389.5 300.7L393.5 299.1L397.5 296.7L403.5 296.0ZM408.3 299.5L403.5 296.5L398.5 297.2L389.9 301.5L390.1 305.5L392.5 308.1L398.5 306.4L400.5 306.5L405.5 304.1L408.6 300.5Z"/><path fill="rgb(83,0,112)" d="M409.8 199.5L411.8 203.5L411.8 204.5L411.2 207.5L410.1 209.5L405.5 213.4L393.5 221.2L388.5 222.6L379.5 222.5L375.5 221.4L374.5 220.7L370.4 215.5L369.4 210.5L372.0 204.5L376.5 199.1L381.5 195.2L386.5 193.4L391.5 193.1L399.5 193.6L404.4 195.5ZM408.0 199.5L402.1 195.5L399.5 194.5L391.5 193.8L386.5 194.2L381.5 196.1L376.5 200.2L373.5 203.7L370.9 209.5L371.5 214.7L375.5 220.0L379.5 221.6L388.5 221.8L393.5 220.4L397.5 218.0L401.5 214.5L406.0 211.5L409.2 207.5L410.1 204.5ZM374.2 292.5L382.5 287.3L387.5 282.8L393.5 279.4L400.5 278.1L407.5 280.9L410.5 284.7L415.5 287.2L429.5 286.8L440.5 287.0L446.5 288.4L450.5 290.9L453.5 292.1L457.5 292.0L463.5 290.8L471.5 292.0L473.4 295.5L474.0 302.5L476.3 309.5L478.6 319.5L481.6 341.5L480.6 347.5L479.5 348.6L472.5 352.2L446.5 359.7L410.5 368.8L401.5 370.2L397.5 370.0L396.5 369.0L394.7 365.5L395.8 357.5L395.5 354.5L393.7 349.5L389.5 344.1L381.5 338.1L376.3 332.5L372.5 326.5L371.0 321.5L372.1 317.5L374.5 313.0L378.2 308.5L376.0 304.5L373.7 298.5ZM380.8 291.5L379.5 297.5L382.9 301.5L386.5 301.9L388.5 300.0L392.6 298.5L395.5 296.3L403.5 295.3L409.4 299.5L409.2 300.5L406.5 303.9L401.5 307.0L395.5 309.1L391.5 309.8L389.5 308.4L385.5 308.4L380.5 310.9L375.5 315.5L373.7 318.5L372.9 321.5L374.4 326.5L377.6 331.5L380.5 335.0L390.5 342.0L395.4 348.5L397.5 354.5L397.9 358.5L397.4 364.5L398.5 366.7L400.9 368.5L404.5 368.8L411.5 367.7L445.5 359.1L470.5 351.9L474.5 350.3L478.8 347.5L480.0 341.5L477.3 320.5L476.2 314.5L473.2 303.5L472.6 299.5L472.7 295.5L471.5 292.9L463.5 291.2L457.5 292.7L453.5 292.8L450.5 291.5L446.5 288.9L440.5 287.4L423.5 287.4L416.5 288.0L413.5 287.7L409.5 285.5L408.9 283.5L406.9 281.5L399.5 278.8L393.5 280.3L385.8 285.5L384.5 288.0ZM408.9 299.5L403.5 296.0L397.5 296.7L393.5 299.1L389.5 300.7L388.9 301.5L388.6 304.5L387.8 305.5L389.5 306.3L391.5 308.8L395.5 308.3L398.5 307.1L400.5 306.9L405.5 304.4L408.9 300.5ZM489.5 280.1L492.8 281.5L493.6 282.5L490.5 285.8L488.5 285.1L487.8 283.5L488.5 280.4ZM489.5 281.3L488.6 283.5L489.5 284.6L490.5 284.4L492.0 282.5Z"/><path fill="rgb(89,0,120)" d="M408.0 199.5L410.1 204.5L409.2 207.5L406.0 211.5L401.5 214.5L397.5 218.0L393.5 220.4L388.5 221.8L379.5 221.6L375.5 220.0L371.5 214.7L370.9 209.5L373.5 203.7L376.5 200.2L381.5 196.1L386.5 194.2L391.5 193.8L399.5 194.5L402.1 195.5ZM406.5 200.3L401.5 196.5L398.5 195.2L392.5 194.6L387.5 194.8L382.5 196.5L377.3 200.5L374.1 204.5L372.2 209.5L372.7 214.5L376.5 219.2L380.5 220.9L388.5 221.0L393.5 219.6L396.9 217.5L403.8 211.5L407.5 206.6L408.0 204.5ZM380.8 291.5L384.5 288.0L385.8 285.5L393.5 280.3L399.5 278.8L406.9 281.5L408.9 283.5L409.5 285.5L413.5 287.7L416.5 288.0L423.5 287.4L440.5 287.4L446.5 288.9L450.5 291.5L453.5 292.8L457.5 292.7L463.5 291.2L471.5 292.9L472.7 295.5L472.6 299.5L473.2 303.5L476.2 314.5L477.3 320.5L480.0 341.5L478.8 347.5L474.5 350.3L470.5 351.9L445.5 359.1L411.5 367.7L404.5 368.8L400.9 368.5L398.5 366.7L397.4 364.5L397.9 358.5L397.5 354.5L395.4 348.5L390.5 342.0L380.5 335.0L377.6 331.5L374.4 326.5L372.9 321.5L373.7 318.5L375.5 315.5L380.5 310.9L385.5 308.4L389.5 308.4L391.5 309.8L395.5 309.1L401.5 307.0L406.5 303.9L409.2 300.5L409.4 299.5L403.5 295.3L395.5 296.3L392.6 298.5L388.5 300.0L386.5 301.9L382.9 301.5L379.5 297.5ZM386.5 286.5L385.2 289.5L385.5 294.5L385.9 295.5L388.5 298.1L389.5 298.3L392.5 297.0L394.5 295.4L401.5 294.9L404.5 293.7L405.2 295.5L410.1 299.5L406.5 304.2L401.5 307.4L395.5 310.2L389.5 311.0L385.5 312.2L381.5 314.0L376.5 317.8L375.0 320.5L376.0 325.5L379.5 331.3L386.5 336.8L391.5 339.9L394.5 343.3L399.3 353.5L399.7 356.5L400.6 358.5L400.3 363.5L402.5 365.7L407.5 367.2L417.3 365.5L444.5 358.5L471.5 350.5L475.4 348.5L478.4 342.5L476.7 331.5L474.9 314.5L472.4 305.5L471.6 299.5L471.6 294.5L470.5 293.1L463.5 291.6L459.5 292.5L457.5 293.5L453.5 293.5L449.5 291.6L446.5 289.5L440.5 287.8L423.5 287.9L416.5 288.6L412.5 288.1L409.1 286.5L407.9 283.5L406.5 282.1L399.5 279.5L393.5 281.1ZM492.0 282.5L490.5 284.4L489.5 284.6L488.6 283.5L489.5 281.3ZM489.5 283.6L489.5 282.9Z"/><path fill="rgb(94,0,129)" d="M406.5 200.3L408.0 204.5L407.5 206.6L403.8 211.5L396.9 217.5L393.5 219.6L388.5 221.0L380.5 220.9L376.5 219.2L372.7 214.5L372.2 209.5L374.1 204.5L377.3 200.5L382.5 196.5L387.5 194.8L392.5 194.6L398.5 195.2L401.5 196.5ZM404.8 200.5L399.4 196.5L392.5 195.3L387.5 195.6L382.5 197.3L377.4 201.5L374.7 205.5L373.6 209.5L373.9 214.5L377.5 218.5L380.5 220.1L387.5 220.3L393.5 218.7L396.5 216.8L401.3 212.5L406.1 205.5ZM386.5 286.5L393.5 281.1L399.5 279.5L406.5 282.1L407.9 283.5L409.1 286.5L412.5 288.1L416.5 288.6L423.5 287.9L440.5 287.8L446.5 289.5L449.5 291.6L453.5 293.5L457.5 293.5L459.5 292.5L463.5 291.6L470.5 293.1L471.6 294.5L471.6 299.5L472.4 305.5L474.9 314.5L476.7 331.5L478.4 342.5L475.4 348.5L471.5 350.5L444.5 358.5L417.3 365.5L407.5 367.2L402.5 365.7L400.3 363.5L400.6 358.5L399.7 356.5L399.3 353.5L394.5 343.3L391.5 339.9L386.5 336.8L379.5 331.3L376.0 325.5L375.0 320.5L376.5 317.8L381.5 314.0L385.5 312.2L389.5 311.0L395.5 310.2L401.5 307.4L406.5 304.2L410.1 299.5L405.2 295.5L404.5 293.7L401.5 294.9L394.5 295.4L392.5 297.0L389.5 298.3L388.5 298.1L385.9 295.5L385.5 294.5L385.2 289.5ZM387.5 287.4L386.7 289.5L387.3 292.5L389.5 295.9L390.5 296.3L393.5 294.6L400.5 294.3L405.5 292.1L406.6 295.5L410.5 298.5L410.7 299.5L406.5 304.6L401.5 308.2L397.5 310.2L396.5 311.7L393.5 312.1L383.5 315.7L380.4 317.5L377.7 320.5L378.2 325.5L381.6 329.5L386.5 333.7L390.5 335.7L395.5 341.0L399.0 349.5L401.1 352.5L401.5 354.3L403.4 357.5L404.5 363.0L405.5 363.5L413.5 364.4L429.2 361.5L444.5 357.7L465.5 351.5L469.5 349.8L473.8 346.5L475.5 343.5L475.4 337.5L473.7 315.5L471.2 305.5L470.7 299.5L470.9 294.5L470.5 293.9L463.5 292.0L460.5 292.7L456.5 294.3L453.5 294.3L445.5 289.6L440.5 288.2L421.5 288.4L415.5 289.2L410.5 288.6L408.3 287.5L406.5 283.1L399.5 280.3L393.5 282.0L390.5 284.2ZM489.5 282.9L489.5 283.6Z"/><path fill="rgb(97,0,138)" d="M404.8 200.5L406.1 205.5L401.3 212.5L396.5 216.8L393.5 218.7L387.5 220.3L380.5 220.1L377.5 218.5L373.9 214.5L373.6 209.5L374.7 205.5L377.4 201.5L382.5 197.3L387.5 195.6L392.5 195.3L399.4 196.5ZM403.1 200.5L397.5 196.8L392.5 196.0L387.5 196.3L382.5 198.1L377.5 202.5L375.7 205.5L374.7 208.5L375.0 213.5L375.4 214.5L379.2 218.5L381.5 219.3L387.5 219.5L393.5 217.8L395.6 216.5L400.1 212.5L403.9 206.5L404.1 205.5ZM387.5 287.4L390.5 284.2L393.5 282.0L399.5 280.3L406.5 283.1L408.3 287.5L410.5 288.6L415.5 289.2L421.5 288.4L440.5 288.2L445.5 289.6L453.5 294.3L456.5 294.3L460.5 292.7L463.5 292.0L470.5 293.9L470.9 294.5L470.7 299.5L471.2 305.5L473.7 315.5L475.4 337.5L475.5 343.5L473.8 346.5L469.5 349.8L465.5 351.5L444.5 357.7L429.2 361.5L413.5 364.4L405.5 363.5L404.5 363.0L403.4 357.5L401.5 354.3L401.1 352.5L399.0 349.5L395.5 341.0L390.5 335.7L386.5 333.7L381.6 329.5L378.2 325.5L377.7 320.5L380.4 317.5L383.5 315.7L393.5 312.1L396.5 311.7L397.5 310.2L401.5 308.2L406.5 304.6L410.7 299.5L410.5 298.5L406.6 295.5L405.5 292.1L400.5 294.3L393.5 294.6L390.5 296.3L389.5 295.9L387.3 292.5L386.7 289.5ZM388.4 288.5L388.5 290.5L390.5 293.6L391.5 294.3L400.0 293.5L402.5 292.7L406.5 290.3L407.2 294.5L410.7 297.5L411.1 298.5L410.7 300.5L406.5 304.9L402.8 307.5L401.5 309.2L398.5 310.5L396.5 313.3L386.5 317.0L383.8 318.5L382.5 320.1L381.7 323.5L381.9 324.5L384.5 328.0L391.5 332.6L396.5 338.6L397.6 342.5L400.3 348.5L402.5 351.7L405.5 354.5L406.9 356.5L407.5 358.8L409.5 361.0L410.5 361.5L414.5 361.5L423.5 360.5L442.5 357.0L447.5 355.5L450.5 353.8L467.5 347.4L471.7 344.5L472.4 342.5L471.3 332.5L471.6 327.5L472.6 322.5L472.5 316.5L472.0 312.5L470.0 305.5L469.8 299.5L470.2 294.5L469.5 294.0L463.5 292.4L460.5 293.1L456.5 295.0L453.5 295.0L445.5 290.2L440.5 288.6L420.5 289.0L415.5 289.8L409.5 289.1L407.7 288.5L406.4 284.5L405.6 283.5L399.5 281.1L393.5 282.9L391.3 284.5Z"/><path fill="rgb(95,0,146)" d="M403.1 200.5L404.1 205.5L403.9 206.5L400.1 212.5L395.6 216.5L393.5 217.8L387.5 219.5L381.5 219.3L379.2 218.5L375.4 214.5L375.0 213.5L374.7 208.5L375.7 205.5L377.5 202.5L382.5 198.1L387.5 196.3L392.5 196.0L397.5 196.8ZM397.5 198.0L393.5 196.8L387.5 197.0L382.5 198.9L379.5 201.5L376.3 206.5L375.7 208.5L376.1 213.5L381.5 218.5L387.5 218.8L393.5 217.0L398.0 213.5L402.3 206.5L401.9 201.5ZM391.3 284.5L393.5 282.9L399.5 281.1L405.6 283.5L406.4 284.5L407.7 288.5L409.5 289.1L415.5 289.8L420.5 289.0L440.5 288.6L445.5 290.2L453.5 295.0L456.5 295.0L460.5 293.1L463.5 292.4L469.5 294.0L470.2 294.5L469.8 299.5L470.0 305.5L472.0 312.5L472.5 316.5L472.6 322.5L471.6 327.5L471.3 332.5L472.4 342.5L471.7 344.5L467.5 347.4L450.5 353.8L447.5 355.5L442.5 357.0L423.5 360.5L414.5 361.5L410.5 361.5L409.5 361.0L407.5 358.8L406.9 356.5L405.5 354.5L402.5 351.7L400.3 348.5L397.6 342.5L396.5 338.6L391.5 332.6L384.5 328.0L381.9 324.5L381.7 323.5L382.5 320.1L383.8 318.5L386.5 317.0L396.5 313.3L398.5 310.5L401.5 309.2L402.8 307.5L406.5 304.9L410.7 300.5L411.1 298.5L410.7 297.5L407.2 294.5L406.5 290.3L402.5 292.7L400.0 293.5L391.5 294.3L390.5 293.6L388.5 290.5L388.4 288.5ZM389.8 288.5L391.9 292.5L392.5 292.9L395.5 293.1L398.5 292.9L402.5 291.6L406.0 289.5L406.6 288.5L405.5 284.5L399.5 281.8L394.5 283.2L392.6 284.5ZM408.5 289.9L407.9 290.5L408.3 294.5L411.5 296.7L411.5 300.5L403.6 307.5L401.5 310.2L399.1 311.5L397.5 315.2L395.5 317.6L389.0 322.5L392.6 326.5L394.5 327.5L396.3 331.5L398.9 341.5L400.9 346.5L403.1 350.5L408.5 354.7L411.5 355.7L416.5 358.6L442.5 355.6L447.5 354.0L451.5 350.9L456.0 348.5L457.0 346.5L461.4 343.5L463.5 340.5L464.8 335.5L468.5 328.1L471.1 320.5L470.7 312.5L468.9 305.5L469.0 297.5L469.6 294.5L464.5 292.7L460.6 293.5L456.5 295.6L453.5 295.7L444.5 290.2L440.5 289.0L419.5 289.5L415.5 290.4Z"/><path fill="rgb(92,0,153)" d="M401.9 201.5L402.3 206.5L398.0 213.5L393.5 217.0L387.5 218.8L381.5 218.5L376.1 213.5L375.7 208.5L376.3 206.5L379.5 201.5L382.5 198.9L387.5 197.0L393.5 196.8L397.5 198.0ZM400.5 201.5L396.5 198.7L393.5 197.6L387.5 197.8L382.5 199.7L380.5 201.5L377.3 206.5L376.8 208.5L377.2 213.5L381.5 217.4L382.5 217.7L387.5 218.0L392.8 216.5L396.7 213.5L399.4 209.5L400.6 206.5ZM405.5 284.5L406.6 288.5L406.0 289.5L402.5 291.6L398.5 292.9L392.5 292.9L389.8 288.5L392.6 284.5L394.5 283.2L399.5 281.8ZM391.2 288.5L392.9 291.5L396.5 292.4L402.5 290.5L405.1 288.5L405.2 287.5L404.3 284.5L399.5 282.7L394.5 284.1L392.5 285.6ZM408.5 289.9L415.5 290.4L419.5 289.5L440.5 289.0L444.5 290.2L453.5 295.7L456.5 295.6L460.6 293.5L464.5 292.7L469.6 294.5L469.0 297.5L468.9 305.5L470.7 312.5L471.1 320.5L468.5 328.1L464.8 335.5L463.5 340.5L461.4 343.5L457.0 346.5L456.0 348.5L451.5 350.9L447.5 354.0L442.5 355.6L416.5 358.6L411.5 355.7L408.5 354.7L403.1 350.5L400.9 346.5L398.9 341.5L396.3 331.5L394.5 327.5L392.6 326.5L389.0 322.5L395.5 317.6L397.5 315.2L399.1 311.5L401.5 310.2L403.6 307.5L411.5 300.5L411.5 296.7L408.3 294.5L407.9 290.5ZM468.8 294.5L464.5 293.0L461.5 293.6L455.5 296.6L453.5 296.4L451.5 295.7L444.2 290.5L440.5 289.4L419.5 290.0L414.5 291.1L409.4 290.5L409.5 293.5L412.1 296.5L412.0 300.5L405.3 306.5L402.2 310.5L400.5 311.5L399.3 313.5L398.5 317.9L395.8 322.5L396.6 325.5L396.5 327.5L398.5 334.0L400.1 341.5L403.5 349.1L410.5 353.8L415.5 354.4L418.5 355.6L423.5 355.3L426.5 355.9L442.5 354.2L447.5 352.3L449.7 350.5L453.6 343.5L453.4 339.5L454.5 335.5L457.9 331.5L463.6 328.5L467.4 324.5L469.3 320.5L469.6 316.5L469.2 311.5L467.8 305.5L468.0 299.5Z"/><path fill="rgb(89,0,160)" d="M400.5 201.5L400.6 206.5L399.4 209.5L396.7 213.5L392.8 216.5L387.5 218.0L382.5 217.7L381.5 217.4L377.2 213.5L376.8 208.5L377.3 206.5L380.5 201.5L382.5 199.7L387.5 197.8L393.5 197.6L396.5 198.7ZM393.5 198.6L387.5 198.6L382.6 200.5L378.3 206.5L377.9 208.5L378.5 213.5L381.5 216.1L386.5 217.3L392.5 215.9L394.3 214.5L397.6 210.5L399.2 207.5L399.1 202.5L398.6 201.5ZM391.2 288.5L392.5 285.6L394.5 284.1L399.5 282.7L404.3 284.5L405.2 287.5L405.1 288.5L402.5 290.5L396.5 292.4L392.9 291.5ZM392.4 287.5L393.5 290.3L396.5 291.2L401.5 289.5L403.9 287.5L403.5 285.5L402.7 284.5L399.5 283.5L394.5 285.0ZM468.8 294.5L468.0 299.5L467.8 305.5L469.2 311.5L469.6 316.5L469.3 320.5L467.4 324.5L463.6 328.5L457.9 331.5L454.5 335.5L453.4 339.5L453.6 343.5L449.7 350.5L447.5 352.3L442.5 354.2L426.5 355.9L423.5 355.3L418.5 355.6L415.5 354.4L410.5 353.8L403.5 349.1L400.1 341.5L398.5 334.0L396.5 327.5L396.6 325.5L395.8 322.5L398.5 317.9L399.3 313.5L400.5 311.5L402.2 310.5L405.3 306.5L412.0 300.5L412.1 296.5L409.5 293.5L409.4 290.5L414.5 291.1L419.5 290.0L440.5 289.4L444.2 290.5L451.5 295.7L453.5 296.4L455.5 296.6L461.5 293.6L464.5 293.0ZM411.0 291.5L410.9 293.5L412.8 295.5L412.6 300.5L406.0 306.5L402.5 311.3L401.0 312.5L399.4 319.5L399.3 321.5L398.4 323.5L398.7 325.5L398.2 328.5L399.6 333.5L400.2 338.5L401.0 341.5L404.4 348.5L411.5 352.3L420.5 353.1L427.5 354.4L441.5 353.1L446.5 351.3L450.8 344.5L452.3 338.5L452.9 332.5L459.5 328.2L462.5 326.8L466.5 321.8L467.8 319.5L467.8 311.5L466.4 306.5L467.2 299.5L468.3 295.5L467.9 294.5L464.5 293.4L454.5 297.3L451.5 296.6L443.3 290.5L440.5 289.8L419.5 290.5L414.5 291.7Z"/><path fill="rgb(87,0,169)" d="M398.6 201.5L399.1 202.5L399.2 207.5L397.5 210.6L393.1 215.5L387.5 217.2L385.5 217.2L381.5 216.1L378.5 213.5L377.9 207.5L382.6 200.5L387.5 198.6L391.5 198.3L393.5 198.6ZM395.5 200.8L393.5 199.9L388.5 199.3L387.2 199.5L383.1 201.5L379.0 207.5L379.2 212.5L379.9 213.5L381.5 214.6L386.5 216.4L391.0 215.5L393.0 214.5L397.0 209.5L397.9 207.5L397.7 202.5ZM392.4 287.5L394.5 285.0L399.5 283.5L402.7 284.5L403.5 285.5L403.9 287.5L401.5 289.5L396.5 291.2L393.5 290.3ZM402.4 285.5L400.5 284.3L395.4 285.5L394.0 286.5L393.4 287.5L394.5 289.2L396.5 289.5L401.5 287.8L402.7 286.5ZM411.0 291.5L414.5 291.7L419.5 290.5L440.5 289.8L443.3 290.5L451.5 296.6L454.5 297.3L464.5 293.4L467.9 294.5L468.3 295.5L467.2 299.5L466.4 306.5L467.8 311.5L467.8 319.5L466.5 321.8L462.5 326.8L459.5 328.2L452.9 332.5L452.3 338.5L450.8 344.5L446.5 351.3L441.5 353.1L427.5 354.4L420.5 353.1L411.5 352.3L404.4 348.5L401.0 341.5L400.2 338.5L399.6 333.5L398.2 328.5L398.7 325.5L398.4 323.5L399.3 321.5L399.4 319.5L401.0 312.5L402.5 311.3L406.0 306.5L412.6 300.5L412.8 295.5L410.9 293.5ZM467.5 295.0L464.5 293.7L463.5 293.9L454.5 298.1L451.5 297.3L441.5 290.3L419.5 291.0L412.3 292.5L413.3 295.5L412.7 301.5L407.8 305.5L404.5 309.5L401.8 313.5L400.4 319.5L400.5 325.5L399.7 328.5L400.6 332.5L400.8 336.5L402.0 341.5L405.3 347.5L411.6 350.5L415.5 351.5L422.5 351.9L428.5 352.9L441.5 351.8L446.5 349.6L449.3 344.5L450.9 338.5L451.4 333.5L452.5 330.4L462.0 324.5L466.3 318.5L466.6 312.5L465.0 306.5L465.6 300.5L466.5 300.1L467.8 295.5Z"/><path fill="rgb(85,0,178)" d="M395.5 200.8L397.7 202.5L397.9 207.5L397.0 209.5L393.0 214.5L391.0 215.5L386.5 216.4L381.5 214.6L379.9 213.5L379.2 212.5L379.0 207.5L383.1 201.5L387.2 199.5L388.5 199.3L393.5 199.9ZM396.1 202.5L393.5 201.3L388.5 200.6L383.5 202.7L380.8 206.5L380.4 212.5L386.5 215.1L391.5 214.0L396.3 208.5ZM402.4 285.5L402.7 286.5L401.5 287.8L396.5 289.5L394.5 289.2L393.4 287.5L394.0 286.5L395.4 285.5L400.5 284.3ZM401.3 285.5L400.5 285.0L395.5 286.3L394.8 287.5L395.5 288.0L400.5 286.6ZM467.5 295.0L467.8 295.5L466.5 300.1L465.6 300.5L465.0 306.5L466.6 312.5L466.3 318.5L462.0 324.5L452.5 330.4L451.4 333.5L450.9 338.5L449.3 344.5L446.5 349.6L441.5 351.8L428.5 352.9L422.5 351.9L415.5 351.5L411.6 350.5L405.3 347.5L402.0 341.5L400.8 336.5L400.6 332.5L399.7 328.5L400.5 325.5L400.4 319.5L401.8 313.5L404.5 309.5L407.8 305.5L412.7 301.5L413.3 295.5L412.3 292.5L419.5 291.0L441.5 290.3L451.5 297.3L454.5 298.1L463.5 293.9L464.5 293.7ZM414.5 292.9L413.9 293.5L413.4 301.5L408.5 305.5L404.6 310.5L402.9 313.5L401.5 318.5L401.6 335.5L403.0 341.5L406.1 346.5L412.5 349.2L416.5 350.3L433.5 351.5L440.5 350.8L444.2 349.5L445.7 348.5L447.7 345.5L449.4 339.5L450.3 333.5L451.6 329.5L452.5 328.4L461.5 323.5L464.7 318.5L465.3 312.5L463.7 307.5L463.7 305.5L462.8 301.5L463.6 299.5L465.5 299.5L466.4 298.5L467.3 295.5L465.5 294.4L463.5 294.3L454.5 299.2L450.5 297.6L441.5 290.8L419.5 291.4Z"/><path fill="rgb(83,0,184)" d="M396.1 202.5L396.3 208.5L391.5 214.0L386.5 215.1L380.4 212.5L380.8 206.5L383.5 202.7L388.5 200.6L393.5 201.3ZM394.5 203.0L388.5 202.0L383.5 204.4L382.1 206.5L382.5 211.8L383.3 212.5L386.5 213.6L391.5 212.4L394.6 208.5L394.9 203.5ZM401.3 285.5L400.5 286.6L395.5 288.0L394.8 287.5L395.5 286.3L400.5 285.0ZM414.5 292.9L419.5 291.4L441.5 290.8L450.5 297.6L454.5 299.2L463.5 294.3L465.5 294.4L467.3 295.5L466.4 298.5L465.5 299.5L463.6 299.5L462.8 301.5L463.7 305.5L463.7 307.5L465.3 312.5L464.7 318.5L461.5 323.5L452.5 328.4L451.6 329.5L450.3 333.5L449.4 339.5L447.7 345.5L445.7 348.5L444.2 349.5L440.5 350.8L433.5 351.5L416.5 350.3L412.5 349.2L406.1 346.5L403.0 341.5L401.6 335.5L401.5 318.5L402.9 313.5L404.6 310.5L408.5 305.5L413.4 301.5L413.9 293.5ZM466.8 295.5L464.4 294.5L458.2 297.5L455.5 301.9L453.2 299.5L450.5 298.5L441.5 291.3L436.5 291.0L432.5 291.6L420.5 292.0L415.0 293.5L414.2 295.5L413.9 301.5L409.2 305.5L404.1 312.5L402.4 318.5L402.2 321.5L402.5 335.5L403.5 340.5L406.5 345.3L412.5 348.0L417.5 349.1L425.5 349.9L434.5 350.2L440.5 349.6L445.5 347.0L446.4 345.5L448.3 339.5L449.2 333.5L451.0 327.5L460.0 323.5L463.6 318.5L464.0 312.5L460.9 303.5L459.4 302.5L461.5 298.5L462.5 298.2L465.5 298.6Z"/><path fill="rgb(81,0,189)" d="M394.5 203.0L394.9 203.5L394.6 208.5L391.5 212.4L386.5 213.6L383.3 212.5L382.5 211.8L382.1 206.5L383.5 204.4L388.5 202.0ZM392.2 204.5L389.5 203.5L384.3 205.5L383.7 206.5L384.3 211.5L386.5 212.0L390.5 211.1L391.5 210.4L392.5 208.5ZM466.8 295.5L465.5 298.6L462.5 298.2L461.5 298.5L459.4 302.5L460.9 303.5L464.0 312.5L463.6 318.5L460.0 323.5L451.0 327.5L449.2 333.5L448.3 339.5L446.4 345.5L445.5 347.0L440.5 349.6L434.5 350.2L425.5 349.9L417.5 349.1L412.5 348.0L406.5 345.3L403.5 340.5L402.5 335.5L402.2 321.5L402.4 318.5L404.1 312.5L409.2 305.5L413.9 301.5L414.2 295.5L415.0 293.5L420.5 292.0L432.5 291.6L436.5 291.0L441.5 291.3L450.5 298.5L453.2 299.5L455.5 301.9L458.2 297.5L464.4 294.5ZM459.5 304.8L456.5 304.3L455.5 303.7L451.5 299.5L449.5 298.6L441.5 292.2L439.9 291.5L420.5 292.7L416.5 293.8L415.5 294.5L415.0 295.5L414.4 301.5L413.8 302.5L410.0 305.5L404.9 312.5L403.4 318.5L403.1 322.5L403.5 334.5L404.5 340.5L407.5 344.5L411.5 346.5L423.5 348.6L434.5 349.0L440.5 348.4L444.5 346.1L445.5 344.8L447.2 339.5L449.6 326.5L452.5 325.8L458.5 323.3L460.5 321.5L462.4 318.5L463.0 313.5ZM461.0 296.5L461.5 297.1L465.5 297.7L466.2 295.5L464.5 294.9Z"/><path fill="rgb(79,0,193)" d="M392.2 204.5L392.5 208.5L391.5 210.4L390.5 211.1L386.5 212.0L384.3 211.5L383.7 206.5L384.3 205.5L389.5 203.5ZM459.5 304.8L463.0 313.5L462.4 318.5L460.5 321.5L458.5 323.3L452.5 325.8L449.6 326.5L447.2 339.5L445.5 344.8L444.5 346.1L440.5 348.4L434.5 349.0L423.5 348.6L411.5 346.5L407.5 344.5L404.5 340.5L403.5 334.5L403.1 322.5L403.4 318.5L404.9 312.5L410.0 305.5L413.8 302.5L414.4 301.5L415.0 295.5L415.5 294.5L416.5 293.8L420.5 292.7L439.9 291.5L441.5 292.2L449.5 298.6L451.5 299.5L455.5 303.7L456.5 304.3ZM458.6 306.5L456.5 306.0L454.4 304.5L450.8 300.5L442.5 293.8L438.5 292.2L435.5 291.9L422.5 293.2L417.2 294.5L415.5 296.8L414.6 302.5L411.8 304.5L407.0 310.5L405.8 312.5L404.0 322.5L404.5 334.5L405.9 340.5L408.4 343.5L411.5 345.4L423.5 347.5L429.5 348.0L438.5 347.4L440.5 347.0L444.5 344.2L446.0 340.5L448.3 325.5L450.5 324.7L453.5 324.5L457.5 322.8L460.9 319.5L462.1 313.5ZM461.0 296.5L464.5 294.9L466.2 295.5L465.5 297.7L461.5 297.1ZM462.8 296.5L465.3 296.5L465.7 295.5L464.5 295.3Z"/><path fill="rgb(77,1,199)" d="M458.6 306.5L462.1 313.5L460.9 319.5L457.5 322.8L453.5 324.5L450.5 324.7L448.3 325.5L446.0 340.5L444.5 344.2L440.5 347.0L438.5 347.4L429.5 348.0L423.5 347.5L411.5 345.4L408.4 343.5L405.9 340.5L404.5 334.5L404.0 322.5L405.8 312.5L407.0 310.5L411.8 304.5L414.6 302.5L415.5 296.8L417.2 294.5L422.5 293.2L435.5 291.9L438.5 292.2L442.5 293.8L450.8 300.5L454.4 304.5L456.5 306.0ZM458.0 308.5L452.5 304.6L450.5 302.3L449.5 301.8L448.5 302.4L448.1 299.5L442.5 294.7L439.5 293.9L437.3 292.5L435.5 292.3L422.5 293.8L417.5 295.5L415.8 298.5L415.3 302.5L412.7 304.5L412.3 305.5L409.5 308.3L407.1 311.5L406.4 313.5L405.0 322.5L405.5 334.5L407.4 340.5L408.5 341.9L411.5 344.1L423.5 346.4L432.5 346.8L438.5 346.2L440.5 345.4L444.1 342.5L445.0 340.5L446.5 325.4L447.1 324.5L449.5 323.7L453.5 323.5L456.5 322.4L457.8 321.5L460.1 318.5L461.2 313.5ZM465.7 295.5L465.3 296.5L462.8 296.5L464.5 295.3Z"/><path fill="rgb(74,2,204)" d="M458.0 308.5L461.2 313.5L460.1 318.5L457.8 321.5L456.5 322.4L453.5 323.5L449.5 323.7L447.1 324.5L446.5 325.4L445.0 340.5L444.1 342.5L440.5 345.4L438.5 346.2L432.5 346.8L423.5 346.4L411.5 344.1L408.5 341.9L407.4 340.5L405.5 334.5L405.0 322.5L406.4 313.5L407.1 311.5L409.5 308.3L412.3 305.5L412.7 304.5L415.3 302.5L415.8 298.5L417.5 295.5L422.5 293.8L435.5 292.3L437.3 292.5L439.5 293.9L442.5 294.7L448.1 299.5L448.5 302.4L449.5 301.8L450.5 302.3L452.5 304.6ZM436.5 293.3L430.3 293.5L423.5 294.4L419.5 295.5L418.5 296.2L416.5 299.5L415.8 302.5L413.9 304.5L413.5 306.1L408.1 311.5L406.1 321.5L406.0 328.5L406.6 334.5L408.2 339.5L410.5 341.8L414.7 343.5L427.5 345.8L435.5 345.4L439.5 344.4L443.8 340.5L444.8 334.5L445.1 324.5L445.5 323.8L449.5 322.3L453.5 322.3L456.5 321.4L459.0 318.5L460.1 313.5L457.1 309.5L451.5 305.4L450.0 305.5L449.8 307.5L447.5 313.8L446.3 312.5L445.1 306.5L446.7 300.5L444.6 297.5L442.5 295.7L439.5 295.1Z"/><path fill="rgb(72,2,209)" d="M442.5 295.7L444.6 297.5L446.7 300.5L445.1 306.5L445.9 311.5L447.5 313.8L449.8 307.5L450.0 305.5L450.5 305.2L451.5 305.4L457.1 309.5L460.1 313.5L460.2 314.5L459.0 318.5L456.3 321.5L454.5 322.3L449.5 322.3L446.5 323.2L445.1 324.5L444.8 334.5L443.5 341.0L440.9 343.5L438.5 344.7L435.5 345.4L428.5 345.9L414.7 343.5L410.5 341.8L408.2 339.5L406.6 334.5L406.0 326.5L406.7 317.5L408.1 311.5L413.5 306.1L413.9 304.5L415.8 302.5L416.5 299.5L418.5 296.2L419.5 295.5L423.5 294.4L436.5 293.3L439.5 295.1ZM428.5 294.4L419.6 296.5L416.5 301.6L415.2 304.5L415.1 306.5L410.5 310.5L408.5 313.8L407.4 320.5L407.8 324.5L407.1 328.5L407.8 334.5L409.9 339.5L416.6 342.5L428.5 344.8L435.5 344.1L439.5 342.8L442.5 339.4L443.4 336.5L443.7 323.5L444.5 321.1L448.5 318.2L450.5 320.7L452.5 321.1L455.5 320.8L458.2 317.5L459.2 314.5L458.5 312.8L456.5 310.6L451.5 306.9L449.6 311.5L448.5 316.1L444.9 312.5L443.6 305.5L445.0 301.5L442.3 297.5L441.1 296.5L438.5 296.0L436.5 294.9L432.5 294.3Z"/><path fill="rgb(70,3,214)" d="M432.5 294.3L436.5 294.9L438.5 296.0L441.1 296.5L443.5 298.9L445.0 301.5L443.6 305.5L444.9 312.5L447.5 315.5L448.5 316.1L449.6 311.5L451.5 306.9L455.5 309.7L458.5 312.8L459.2 314.5L457.6 318.5L455.5 320.8L452.5 321.1L450.5 320.7L448.5 318.2L444.5 321.1L443.7 323.5L443.7 334.5L443.2 337.5L442.4 339.5L439.5 342.8L434.5 344.3L428.5 344.8L416.6 342.5L409.9 339.5L407.8 334.5L407.1 328.5L407.8 324.5L407.5 319.5L408.5 313.8L410.5 310.5L415.1 306.5L415.2 304.5L416.5 301.6L419.6 296.5L424.5 295.0ZM425.5 295.9L420.5 297.4L416.7 303.5L416.4 307.5L412.2 310.5L411.2 313.5L409.5 315.5L408.8 318.5L409.4 325.5L408.9 328.5L409.0 333.5L412.2 338.5L419.0 341.5L427.5 343.5L433.5 343.2L438.5 341.5L442.5 335.7L442.3 322.5L443.5 318.4L445.5 316.5L445.9 315.5L443.6 312.5L443.0 307.5L442.0 304.5L442.9 301.5L439.3 297.5L435.5 296.4ZM452.5 309.0L451.5 309.3L449.6 316.5L451.5 319.7L454.5 319.9L457.0 317.5L458.1 314.5L455.6 311.5Z"/><path fill="rgb(67,4,219)" d="M425.5 295.9L435.5 296.4L439.3 297.5L442.9 301.5L442.0 304.5L443.0 307.5L443.6 312.5L445.9 315.5L445.5 316.5L443.5 318.4L442.3 322.5L442.5 335.7L438.5 341.5L433.5 343.2L427.5 343.5L419.0 341.5L412.2 338.5L409.0 333.5L408.9 328.5L409.4 325.5L408.8 318.5L409.5 315.5L411.2 313.5L412.2 310.5L416.4 307.5L416.7 303.5L420.5 297.4ZM426.5 297.8L421.5 299.1L418.7 303.5L417.5 308.5L414.4 311.5L411.6 316.5L410.4 321.5L411.1 326.5L411.0 329.5L411.7 332.5L415.1 337.5L422.5 341.0L427.5 342.2L433.5 341.6L436.5 340.6L439.9 336.5L440.8 334.5L441.5 331.5L440.9 321.5L442.3 315.5L442.9 314.5L441.8 307.5L440.4 303.5L440.9 302.5L438.5 299.8L436.5 298.4ZM452.5 309.0L455.6 311.5L458.1 314.5L457.0 317.5L454.5 319.9L451.5 319.7L449.6 316.5L451.5 309.3ZM452.5 310.4L450.8 316.5L452.4 318.5L454.5 318.6L456.2 316.5L456.7 314.5Z"/><path fill="rgb(64,5,223)" d="M426.5 297.8L436.5 298.4L438.5 299.8L440.9 302.5L440.4 303.5L441.8 307.5L442.9 314.5L442.3 315.5L440.9 321.5L441.5 331.5L440.8 334.5L439.9 336.5L436.5 340.6L433.5 341.6L427.5 342.2L422.5 341.0L415.1 337.5L411.7 332.5L411.0 329.5L411.1 326.5L410.4 321.5L411.6 316.5L414.4 311.5L417.5 308.5L418.7 303.5L421.5 299.1ZM426.5 300.0L422.5 301.1L421.5 301.8L419.8 307.5L420.3 310.5L415.5 315.5L414.5 322.5L414.5 328.5L415.2 331.5L417.5 334.2L418.7 336.5L424.5 340.1L427.5 340.9L432.5 340.3L434.8 339.5L437.5 336.8L439.1 333.5L440.0 328.5L439.5 320.5L440.5 315.5L440.2 313.5L440.8 308.5L439.4 304.5L436.5 300.8L431.5 300.0ZM452.5 310.4L456.7 314.5L456.2 316.5L454.5 318.6L452.4 318.5L450.8 316.5ZM453.5 313.0L452.8 313.5L452.2 315.5L452.5 316.8L453.5 317.3L454.5 317.1L455.4 315.5L455.1 314.5Z"/><path fill="rgb(61,6,227)" d="M426.5 300.0L431.5 300.0L436.5 300.8L439.4 304.5L440.8 308.5L440.2 313.5L440.5 315.5L439.5 320.5L440.0 328.5L439.1 333.5L437.5 336.8L434.8 339.5L432.5 340.3L427.5 340.9L424.5 340.1L418.7 336.5L417.5 334.2L415.2 331.5L414.5 328.5L414.5 322.5L415.5 315.5L420.3 310.5L419.8 307.5L421.5 301.8L422.5 301.1ZM430.5 301.6L427.5 301.6L425.5 303.6L423.5 304.3L422.5 305.2L421.9 307.5L424.2 312.5L420.8 318.5L418.7 326.5L419.3 330.5L421.3 335.5L426.5 339.2L427.5 339.4L432.5 338.7L435.5 336.2L437.4 332.5L438.4 325.5L438.0 320.5L436.5 314.5L437.6 306.5L435.5 302.9ZM453.5 313.0L455.1 314.5L455.4 315.5L454.5 317.1L453.5 317.3L452.5 316.8L452.2 315.5L452.8 313.5ZM453.5 315.8L453.9 315.5L453.5 314.9Z"/><path fill="rgb(57,7,232)" d="M430.5 301.6L435.5 302.9L437.6 306.5L436.5 314.5L438.0 320.5L438.4 325.5L437.4 332.5L435.5 336.2L432.5 338.7L427.5 339.4L426.5 339.2L421.3 335.5L419.3 330.5L418.7 326.5L420.8 318.5L424.2 312.5L421.9 307.5L422.5 305.2L423.5 304.3L425.5 303.6L427.5 301.6ZM428.5 303.1L427.5 303.5L424.6 306.5L424.5 307.5L426.5 310.2L429.5 310.5L430.7 309.5L433.7 304.5L430.5 303.2ZM430.5 312.4L429.5 314.6L425.5 316.5L423.5 319.5L421.2 327.5L421.7 330.5L423.5 334.9L425.5 336.5L428.5 337.3L431.5 337.1L434.2 334.5L435.6 331.5L436.5 326.5L435.8 320.5ZM453.5 314.9L453.9 315.5L453.5 315.8Z"/><path fill="rgb(54,8,236)" d="M428.5 303.1L430.5 303.2L433.7 304.5L430.7 309.5L429.5 310.5L426.5 310.2L424.5 307.5L424.6 306.5L427.5 303.5ZM426.9 306.5L427.5 307.4L428.5 307.7L429.5 307.2L430.6 305.5L429.5 304.7L428.5 304.7ZM430.5 312.4L435.8 320.5L436.5 326.5L435.6 331.5L434.2 334.5L431.5 337.1L428.5 337.3L425.5 336.5L423.5 334.9L421.7 330.5L421.2 327.5L423.5 319.5L425.5 316.5L429.5 314.6ZM426.8 319.5L425.2 321.5L423.7 329.5L425.9 334.5L430.5 335.1L431.5 334.7L432.5 333.5L434.5 327.3L433.8 321.5L432.5 319.6Z"/><path fill="rgb(50,10,241)" d="M429.5 304.7L430.6 305.5L429.5 307.2L428.5 307.7L427.5 307.4L426.9 306.5L428.5 304.7ZM426.8 319.5L432.5 319.6L433.8 321.5L434.5 327.3L432.5 333.5L431.5 334.7L430.5 335.1L425.9 334.5L423.7 329.5L425.2 321.5ZM427.5 322.3L426.4 328.5L430.5 332.6L431.9 327.5L431.6 324.5L429.0 322.5Z"/><path fill="rgb(45,11,245)" d="M427.5 322.3L429.0 322.5L431.6 324.5L431.9 327.5L430.5 332.6L426.4 328.5Z"/></g>
<path fill="none" stroke="#000" stroke-width="1" stroke-linejoin="round" shape-rendering="crispEdges" d="M451.3 179.7L452.5 181.5L450.5 185.5L446.5 188.3L441.5 189.4L437.5 189.3L435.6 186.5L435.6 184.5M415.3 189.7L418.0 191.5L421.0 195.5L423.2 200.5L423.9 206.5L423.2 211.5L420.5 215.9L412.5 221.6L395.8 229.5L382.7 232.5L376.6 236.5L377.9 246.5L377.5 254.9L374.4 262.5L367.5 269.9L362.5 268.8L358.1 263.5L356.4 258.5L356.1 251.5L357.7 244.5L362.1 234.5L360.3 229.5L355.5 225.1L349.2 221.5L344.7 217.5L344.6 214.5L345.7 211.5L348.5 208.5M357.5 285.5L358.2 283.5L362.5 279.5L364.5 276.3L369.5 273.4L377.5 273.0L391.5 270.4L400.5 269.7L407.5 272.3L415.5 277.6L421.5 280.2L434.5 281.7L442.5 281.1L456.5 287.4L470.5 285.3L480.5 291.0L480.5 282.5L483.0 275.5L486.5 272.9L492.5 271.9L497.8 275.5L499.7 280.5L499.5 288.5L492.5 293.7L484.9 294.5L486.1 295.5L485.7 298.5L489.7 305.5L491.8 311.5L492.4 319.5L491.1 329.5L491.3 334.7M383.5 360.5L383.1 356.5L381.6 352.5L379.5 350.0M460.5 194.9L466.6 199.5L466.5 208.5L463.5 210.2L456.5 211.1L455.5 210.7L453.7 207.5L452.9 203.5L454.9 197.5ZM482.8 292.5L482.0 292.5ZM483.5 293.5L484.5 294.2L484.9 293.5ZM406.5 300.5L404.5 299.2L399.5 300.3L395.8 303.5L400.5 304.0L405.5 302.1ZM404.5 192.5L408.5 193.8L413.8 198.5L415.7 203.5L415.6 208.5L414.8 210.5L400.5 220.2L394.5 223.4L389.5 224.8L381.5 225.6L374.5 224.3L368.5 220.5L365.3 216.5L363.7 211.5L365.0 207.5L368.8 202.5M367.6 317.6L369.5 310.5L366.3 300.5L365.6 295.5L368.4 288.5L372.5 285.5L384.5 280.4L393.5 277.3L401.5 276.0L405.5 276.9L412.5 282.3L419.0 285.5L434.5 285.2L445.5 286.4L452.5 290.1L457.5 290.3L464.5 289.1L472.5 290.4L475.7 296.5L481.2 313.5L484.7 336.5M390.4 359.5L390.4 355.5L388.5 350.5L374.5 336.3M444.4 183.5L445.6 183.5ZM460.1 201.5L461.9 201.5L461.5 203.1ZM488.5 276.5L493.5 276.5L496.1 280.5L495.5 284.6L491.5 288.7L487.5 287.5L485.8 284.5L486.9 277.5ZM408.1 300.5L403.5 297.3L398.5 298.2L391.5 302.4L391.5 304.5L393.5 306.7L397.5 305.6L400.5 305.9L405.5 303.6ZM397.0 195.0L400.5 195.8L406.1 199.5L407.3 201.5L408.2 205.5L404.0 211.5L397.0 217.5L393.5 219.6L388.5 221.1L379.5 220.7L376.5 219.4L372.5 214.5L372.1 209.5L374.0 204.5L377.2 200.5M399.7 357.5L399.1 353.5L394.5 343.7L391.5 340.2L379.5 331.6L375.8 325.5L374.8 320.5L376.5 317.5L380.5 314.1L385.5 311.8L395.5 310.0L401.5 307.4L406.2 304.5L410.0 299.5L405.1 295.5L404.5 293.9L401.5 295.0L394.6 295.5L389.5 298.4L388.5 298.5L385.0 295.5L384.8 290.5L386.4 286.5L393.5 281.0L398.5 279.5L406.5 282.1L408.0 283.5L409.2 286.5L412.5 288.0L416.5 288.6L423.5 287.8L440.5 287.8L446.5 289.4L453.5 293.4L457.5 293.4L463.5 291.6L471.2 293.5L471.9 295.5L472.5 305.5L475.1 314.5L478.0 338.5M489.5 282.5L489.5 283.7ZM414.9 353.5L410.5 352.9L403.8 348.5L400.6 341.5L397.3 327.5L397.3 322.5L398.5 320.6L400.4 312.5L405.6 306.5L412.3 300.5L412.5 295.5L410.2 293.5L410.5 291.2L440.5 289.6L443.8 290.5L451.5 296.2L454.5 297.0L463.5 293.4L468.4 294.5L467.1 306.5L468.5 311.5L468.7 319.5L463.1 327.5L455.8 331.5L453.5 333.6L451.9 344.5M399.5 201.5L399.8 207.5L395.9 213.5L392.5 216.3L387.5 217.6L383.5 217.4L381.5 216.7L377.8 213.5L377.5 207.3L382.5 200.1L387.5 198.2L392.5 198.0L396.5 199.4ZM403.6 284.5L404.5 287.8L401.5 290.2L398.1 291.5L393.5 291.1L391.9 288.5L393.2 285.5L395.5 284.2L399.5 283.1ZM434.2 348.8L425.5 348.7L411.5 346.3L407.5 344.2L404.5 339.8L403.2 322.5L405.0 312.5L410.1 305.5L413.9 302.5L415.7 294.5L420.5 292.8L439.6 291.5L451.2 299.5L455.5 303.9L459.9 305.5L462.9 313.5L462.2 318.5L458.5 323.2L449.3 326.5L446.8 340.5L445.4 344.5L443.4 346.5M391.7 204.5L392.2 208.5L391.5 210.1L386.5 211.8L384.7 211.5L384.0 206.5L384.5 205.6L389.5 203.7ZM461.2 296.5L464.5 295.0L466.2 295.5L465.5 297.6ZM425.3 295.5L435.5 296.0L440.0 297.5L443.5 301.5L442.4 304.5L443.9 312.5L446.5 316.5L443.5 319.4L442.6 322.5L442.5 336.5L438.5 341.9L433.5 343.5L427.5 343.7L418.0 341.5L411.1 338.5L408.4 333.5L409.0 325.5L408.5 318.5L409.1 315.5L411.8 310.5L415.9 307.5L416.5 303.3L420.1 297.5ZM451.5 308.7L454.9 310.5L458.4 314.5L457.3 317.5L454.5 320.2L451.5 320.0L449.3 316.5ZM428.5 303.7L432.1 304.5L429.5 309.4L426.5 308.7L425.4 306.5ZM431.5 316.1L435.1 321.5L435.7 326.5L434.9 330.5L433.3 334.5L431.5 336.2L426.5 336.0L424.2 334.5L422.3 329.5L423.7 321.5L426.5 317.4Z"/></g>
<g fill="#fff" shape-rendering="crispEdges">
</g>
<g stroke="#fff" stroke-width="1" fill="none" shape-rendering="crispEdges"><line x1="199.5" x2="199.5" y1="83" y2="466" stroke-dasharray="1 3"/><line x1="231.5" x2="231.5" y1="85" y2="466" stroke-dasharray="1 3"/><line x1="262.5" x2="262.5" y1="83" y2="466" stroke-dasharray="1 3"/><line x1="294.5" x2="294.5" y1="85" y2="466" stroke-dasharray="1 3"/><line x1="326.5" x2="326.5" y1="83" y2="466" stroke-dasharray="1 3"/><line x1="358.5" x2="358.5" y1="85" y2="466" stroke-dasharray="1 3"/><line x1="390.5" x2="390.5" y1="83" y2="466" stroke-dasharray="1 3"/><line x1="422.5" x2="422.5" y1="85" y2="466" stroke-dasharray="1 3"/><line x1="454.5" x2="454.5" y1="83" y2="466" stroke-dasharray="1 3"/><line x1="486.5" x2="486.5" y1="85" y2="466" stroke-dasharray="1 3"/><line y1="454.5" y2="454.5" x1="196" x2="511" stroke-dasharray="1 3"/><line y1="419.5" y2="419.5" x1="196" x2="511" stroke-dasharray="1 3"/><line y1="383.5" y2="383.5" x1="196" x2="511" stroke-dasharray="1 3"/><line y1="347.5" y2="347.5" x1="196" x2="511" stroke-dasharray="1 3"/><line y1="310.5" y2="310.5" x1="196" x2="511" stroke-dasharray="1 3"/><line y1="272.5" y2="272.5" x1="196" x2="511" stroke-dasharray="1 3"/><line y1="233.5" y2="233.5" x1="196" x2="511" stroke-dasharray="1 3"/><line y1="193.5" y2="193.5" x1="196" x2="511" stroke-dasharray="1 3"/><line y1="152.5" y2="152.5" x1="196" x2="511" stroke-dasharray="1 3"/><line y1="110.5" y2="110.5" x1="196" x2="511" stroke-dasharray="1 3"/></g>
<path fill="none" stroke="#fff" stroke-width="1.15" stroke-linejoin="round" shape-rendering="crispEdges" d="M213.6 164.5L212.8 166.4L211.2 166.4L210.4 164.5L211.2 162.6L212.8 162.6ZM254.0 182.2L253.0 183.8L251.0 183.8L250.0 182.2L251.0 180.6L253.0 180.6ZM254.8 182.8L258.0 183.2L262.4 185.4L260.5 186.6L257.0 185.6ZM257.5 178.2L262.0 180.0L266.5 182.8L262.5 181.2ZM272.5 178.0L275.0 177.4L278.6 178.2L278.4 180.4L274.5 180.8L272.6 179.6ZM297.0 195.8L299.5 195.4L301.5 197.6L300.2 198.6L298.4 197.8ZM301.5 196.6L308.6 196.4L308.8 198.4L304.5 199.4L301.6 198.8ZM434.4 294.4L437.0 293.4L441.5 294.6L442.8 296.8L440.5 298.6L436.6 298.0L434.6 296.4ZM445.2 299.5L446.4 302.5M426.4 371.5L426.2 374.1L425.1 375.4L423.7 374.5L422.8 372.1L423.0 369.5L424.1 368.2L425.5 369.1ZM423.6 388.2L422.7 389.6L420.9 389.6L420.0 388.2L420.9 386.8L422.7 386.8ZM436.2 382.0L435.3 383.6L433.5 383.6L432.6 382.0L433.5 380.4L435.3 380.4ZM439.2 378.2L446.0 377.2L452.2 373.6L449.5 378.5L444.6 384.0L441.5 382.5ZM464.4 384.6L463.7 386.8L461.8 388.2L459.4 388.2L457.5 386.8L456.8 384.6L457.5 382.4L459.4 381.0L461.8 381.0L463.7 382.4ZM479.0 383.2L482.2 380.6L484.6 375.0L486.4 370.6L488.8 370.4L488.4 374.5L486.2 380.0L482.6 381.4L480.2 384.0ZM488.4 366.0L492.0 363.2L494.6 361.0L495.8 362.6L494.4 365.6L490.2 368.2L488.6 367.8ZM511.0 383.6L507.0 384.0L504.0 385.2L501.5 387.5L499.0 390.5L497.5 395.0L495.6 399.5L494.0 404.0L491.0 407.6L488.0 410.0L484.0 412.0L480.0 414.4L478.2 418.0L477.0 422.0L475.0 427.0L472.4 432.0L471.6 437.0L471.0 442.0L468.0 445.4L464.0 448.6L460.5 452.0L457.0 455.4L455.4 459.0L455.0 462.0L455.2 466.0M455.6 456.6L457.6 457.6L456.8 459.6L455.2 459.2Z"/>
<g shape-rendering="crispEdges"><rect x="212" y="158" width="2" height="2" fill="#fff"/><rect x="261" y="171" width="3" height="3" fill="#fff"/><rect x="308" y="213" width="3" height="2" fill="#fff"/><rect x="448" y="289" width="2" height="3" fill="#fff"/><rect x="493" y="357" width="2" height="2" fill="#fff"/><rect x="504" y="387" width="3" height="3" fill="#fff"/><rect x="500" y="408" width="1" height="3" fill="#fff"/><rect x="504" y="447" width="2" height="3" fill="#fff"/><rect x="505" y="449" width="2" height="3" fill="#fff"/><rect x="478" y="463" width="2" height="3" fill="#fff"/><rect x="193" y="280" width="3" height="2" fill="#00e6e6"/><rect x="200" y="286" width="2" height="2" fill="#00e6e6"/><rect x="199" y="289" width="2" height="2" fill="#00dc78"/><rect x="207" y="283" width="2" height="2" fill="#00e6e6"/><rect x="209" y="282" width="2" height="2" fill="#00e6e6"/><rect x="221" y="288" width="2" height="2" fill="#00dc78"/><rect x="226" y="280" width="2" height="2" fill="#00e6e6"/><rect x="226" y="283" width="3" height="2" fill="#00e6e6"/><rect x="235" y="282" width="2" height="2" fill="#00e6e6"/><rect x="235" y="285" width="2" height="2" fill="#00e6e6"/><rect x="239" y="281" width="2" height="2" fill="#00e6e6"/><rect x="244" y="288" width="2" height="2" fill="#00dc78"/><rect x="269" y="287" width="1" height="1" fill="#00e6e6"/><rect x="270" y="286" width="1" height="1" fill="#00e6e6"/><rect x="278" y="282" width="1" height="1" fill="#00e6e6"/><rect x="284" y="280" width="1" height="2" fill="#00e6e6"/><rect x="286" y="282" width="2" height="1" fill="#00e6e6"/><rect x="291" y="281" width="1" height="2" fill="#00e6e6"/><rect x="293" y="287" width="1" height="1" fill="#00e6e6"/><rect x="305" y="280" width="2" height="1" fill="#00e6e6"/><rect x="305" y="285" width="2" height="2" fill="#00e6e6"/><rect x="314" y="286" width="2" height="2" fill="#00e6e6"/><rect x="319" y="283" width="2" height="2" fill="#00e6e6"/><rect x="324" y="281" width="3" height="2" fill="#00e6e6"/><rect x="328" y="281" width="2" height="2" fill="#00e6e6"/><rect x="338" y="286" width="2" height="2" fill="#00e6e6"/><rect x="340" y="285" width="2" height="2" fill="#00e6e6"/><rect x="345" y="281" width="3" height="3" fill="#00e6e6"/><rect x="346" y="279" width="2" height="2" fill="#00e6e6"/></g>
<g shape-rendering="crispEdges"><rect x="190" y="79" width="325" height="3" fill="#fff"/><rect x="190" y="466" width="325" height="4" fill="#fff"/><rect x="190" y="79" width="3" height="391" fill="#fff"/><rect x="511" y="79" width="4" height="391" fill="#fff"/><rect x="191" y="80" width="8" height="1" fill="#000"/><rect x="191" y="467" width="8" height="2" fill="#000"/><rect x="231" y="80" width="31" height="1" fill="#000"/><rect x="231" y="467" width="31" height="2" fill="#000"/><rect x="294" y="80" width="32" height="1" fill="#000"/><rect x="294" y="467" width="32" height="2" fill="#000"/><rect x="358" y="80" width="32" height="1" fill="#000"/><rect x="358" y="467" width="32" height="2" fill="#000"/><rect x="422" y="80" width="32" height="1" fill="#000"/><rect x="422" y="467" width="32" height="2" fill="#000"/><rect x="486" y="80" width="28" height="1" fill="#000"/><rect x="486" y="467" width="28" height="2" fill="#000"/><rect x="191" y="80" width="1" height="30" fill="#000"/><rect x="512" y="80" width="2" height="30" fill="#000"/><rect x="191" y="152" width="1" height="41" fill="#000"/><rect x="512" y="152" width="2" height="41" fill="#000"/><rect x="191" y="233" width="1" height="39" fill="#000"/><rect x="512" y="233" width="2" height="39" fill="#000"/><rect x="191" y="310" width="1" height="37" fill="#000"/><rect x="512" y="310" width="2" height="37" fill="#000"/><rect x="191" y="383" width="1" height="36" fill="#000"/><rect x="512" y="383" width="2" height="36" fill="#000"/><rect x="191" y="454" width="1" height="15" fill="#000"/><rect x="512" y="454" width="2" height="15" fill="#000"/></g>
<g><text x="189.3" y="78" font-size="10.6" textLength="20.4" lengthAdjust="spacingAndGlyphs">−32</text><text x="189.3" y="479" font-size="10.6" textLength="20.4" lengthAdjust="spacingAndGlyphs">−32</text><text x="221.3" y="78" font-size="10.6" textLength="20.4" lengthAdjust="spacingAndGlyphs">−30</text><text x="221.3" y="479" font-size="10.6" textLength="20.4" lengthAdjust="spacingAndGlyphs">−30</text><text x="252.3" y="78" font-size="10.6" textLength="20.4" lengthAdjust="spacingAndGlyphs">−28</text><text x="252.3" y="479" font-size="10.6" textLength="20.4" lengthAdjust="spacingAndGlyphs">−28</text><text x="284.3" y="78" font-size="10.6" textLength="20.4" lengthAdjust="spacingAndGlyphs">−26</text><text x="284.3" y="479" font-size="10.6" textLength="20.4" lengthAdjust="spacingAndGlyphs">−26</text><text x="316.3" y="78" font-size="10.6" textLength="20.4" lengthAdjust="spacingAndGlyphs">−24</text><text x="316.3" y="479" font-size="10.6" textLength="20.4" lengthAdjust="spacingAndGlyphs">−24</text><text x="348.3" y="78" font-size="10.6" textLength="20.4" lengthAdjust="spacingAndGlyphs">−22</text><text x="348.3" y="479" font-size="10.6" textLength="20.4" lengthAdjust="spacingAndGlyphs">−22</text><text x="380.3" y="78" font-size="10.6" textLength="20.4" lengthAdjust="spacingAndGlyphs">−20</text><text x="380.3" y="479" font-size="10.6" textLength="20.4" lengthAdjust="spacingAndGlyphs">−20</text><text x="412.3" y="78" font-size="10.6" textLength="20.4" lengthAdjust="spacingAndGlyphs">−18</text><text x="412.3" y="479" font-size="10.6" textLength="20.4" lengthAdjust="spacingAndGlyphs">−18</text><text x="444.3" y="78" font-size="10.6" textLength="20.4" lengthAdjust="spacingAndGlyphs">−16</text><text x="444.3" y="479" font-size="10.6" textLength="20.4" lengthAdjust="spacingAndGlyphs">−16</text><text x="476.3" y="78" font-size="10.6" textLength="20.4" lengthAdjust="spacingAndGlyphs">−14</text><text x="476.3" y="479" font-size="10.6" textLength="20.4" lengthAdjust="spacingAndGlyphs">−14</text><text transform="translate(188.3 460.8) rotate(-90)" font-size="10.6" textLength="12" lengthAdjust="spacingAndGlyphs">24</text><text transform="translate(515.8 448.8) rotate(90)" font-size="10.6" textLength="12" lengthAdjust="spacingAndGlyphs">24</text><text transform="translate(188.3 425.7) rotate(-90)" font-size="10.6" textLength="12" lengthAdjust="spacingAndGlyphs">26</text><text transform="translate(515.8 413.7) rotate(90)" font-size="10.6" textLength="12" lengthAdjust="spacingAndGlyphs">26</text><text transform="translate(188.3 390.0) rotate(-90)" font-size="10.6" textLength="12" lengthAdjust="spacingAndGlyphs">28</text><text transform="translate(515.8 378.0) rotate(90)" font-size="10.6" textLength="12" lengthAdjust="spacingAndGlyphs">28</text><text transform="translate(188.3 353.6) rotate(-90)" font-size="10.6" textLength="12" lengthAdjust="spacingAndGlyphs">30</text><text transform="translate(515.8 341.6) rotate(90)" font-size="10.6" textLength="12" lengthAdjust="spacingAndGlyphs">30</text><text transform="translate(188.3 316.5) rotate(-90)" font-size="10.6" textLength="12" lengthAdjust="spacingAndGlyphs">32</text><text transform="translate(515.8 304.5) rotate(90)" font-size="10.6" textLength="12" lengthAdjust="spacingAndGlyphs">32</text><text transform="translate(188.3 278.6) rotate(-90)" font-size="10.6" textLength="12" lengthAdjust="spacingAndGlyphs">34</text><text transform="translate(515.8 266.6) rotate(90)" font-size="10.6" textLength="12" lengthAdjust="spacingAndGlyphs">34</text><text transform="translate(188.3 239.7) rotate(-90)" font-size="10.6" textLength="12" lengthAdjust="spacingAndGlyphs">36</text><text transform="translate(515.8 227.7) rotate(90)" font-size="10.6" textLength="12" lengthAdjust="spacingAndGlyphs">36</text><text transform="translate(188.3 199.9) rotate(-90)" font-size="10.6" textLength="12" lengthAdjust="spacingAndGlyphs">38</text><text transform="translate(515.8 187.9) rotate(90)" font-size="10.6" textLength="12" lengthAdjust="spacingAndGlyphs">38</text><text transform="translate(188.3 159.0) rotate(-90)" font-size="10.6" textLength="12" lengthAdjust="spacingAndGlyphs">40</text><text transform="translate(515.8 147.0) rotate(90)" font-size="10.6" textLength="12" lengthAdjust="spacingAndGlyphs">40</text><text transform="translate(188.3 116.8) rotate(-90)" font-size="10.6" textLength="12" lengthAdjust="spacingAndGlyphs">42</text><text transform="translate(515.8 104.8) rotate(90)" font-size="10.6" textLength="12" lengthAdjust="spacingAndGlyphs">42</text></g>
<g><text x="203.2" y="22" font-size="11" textLength="43.4" lengthAdjust="spacingAndGlyphs">201190L</text><text x="252" y="22" font-size="11" textLength="23.0" lengthAdjust="spacingAndGlyphs">2011</text><text x="203" y="33" font-size="11" textLength="41.0" lengthAdjust="spacingAndGlyphs">AMSU−A</text><text x="249" y="33" font-size="11" textLength="38.4" lengthAdjust="spacingAndGlyphs">Channel</text><text x="293" y="33" font-size="11" textLength="6.0" lengthAdjust="spacingAndGlyphs">4</text><text x="304.6" y="33" font-size="11" textLength="49.0" lengthAdjust="spacingAndGlyphs">(53.6GHz)</text><text x="359.8" y="33" font-size="11" textLength="50.2" lengthAdjust="spacingAndGlyphs">Brightness</text><text x="415.6" y="33" font-size="11" textLength="60.9" lengthAdjust="spacingAndGlyphs">Temperature</text><text x="482.7" y="33" font-size="11" textLength="14.9" lengthAdjust="spacingAndGlyphs">(C)</text><text x="203.2" y="44" font-size="11" textLength="23.2" lengthAdjust="spacingAndGlyphs">0311</text><text x="233" y="44" font-size="11" textLength="25.0" lengthAdjust="spacingAndGlyphs">Time:</text><text x="265.4" y="44" font-size="11" textLength="23.2" lengthAdjust="spacingAndGlyphs">1656</text><text x="296" y="44" font-size="11" textLength="17.0" lengthAdjust="spacingAndGlyphs">UTC</text><text x="203.2" y="54.6" font-size="11" textLength="45.4" lengthAdjust="spacingAndGlyphs">NOAA−15</text><text x="203.7" y="511.5" font-size="10.4" textLength="18.3" lengthAdjust="spacingAndGlyphs">Max</text><text x="227" y="511.5" font-size="10.4" textLength="14.6" lengthAdjust="spacingAndGlyphs">Tb:</text><text x="265" y="511.5" font-size="10.4" textLength="48.0" lengthAdjust="spacingAndGlyphs">−12.5343</text><text x="327" y="511.5" font-size="10.4" textLength="5.7" lengthAdjust="spacingAndGlyphs">C</text><text x="414.8" y="511.5" font-size="10.4" textLength="38.2" lengthAdjust="spacingAndGlyphs">Contour</text><text x="457.9" y="511.5" font-size="10.4" textLength="35.3" lengthAdjust="spacingAndGlyphs">Interval</text><text x="498.6" y="511.5" font-size="10.4" textLength="6.8" lengthAdjust="spacingAndGlyphs">=</text><text x="513.3" y="511.5" font-size="10.4" textLength="11.1" lengthAdjust="spacingAndGlyphs">1C</text></g>
<defs><linearGradient id="cb" x1="0" y1="0" x2="0" y2="1"><stop offset="0.000" stop-color="rgb(255,0,0)"/><stop offset="0.050" stop-color="rgb(255,0,0)"/><stop offset="0.255" stop-color="rgb(255,255,0)"/><stop offset="0.430" stop-color="rgb(0,255,0)"/><stop offset="0.450" stop-color="rgb(0,255,0)"/><stop offset="0.600" stop-color="rgb(0,255,255)"/><stop offset="0.773" stop-color="rgb(0,0,255)"/><stop offset="0.800" stop-color="rgb(24,0,224)"/><stop offset="0.850" stop-color="rgb(66,0,167)"/><stop offset="0.885" stop-color="rgb(88,0,128)"/><stop offset="0.910" stop-color="rgb(76,0,100)"/><stop offset="0.940" stop-color="rgb(56,0,66)"/><stop offset="0.970" stop-color="rgb(31,0,33)"/><stop offset="1.000" stop-color="rgb(0,0,0)"/></linearGradient></defs>
<g shape-rendering="crispEdges"><rect x="609" y="76" width="8" height="397" fill="#fff"/><rect x="610" y="77" width="6" height="395" fill="url(#cb)"/>
<rect x="610" y="155" width="1" height="1" fill="#fff"/>
<rect x="610" y="234" width="1" height="1" fill="#fff"/>
<rect x="610" y="313" width="1" height="1" fill="#fff"/>
<rect x="610" y="392" width="1" height="1" fill="#fff"/>
</g>
<text x="620" y="83.2" font-size="9.7" textLength="15" lengthAdjust="spacingAndGlyphs">7.0</text>
<text x="620" y="159.8" font-size="10" textLength="15" lengthAdjust="spacingAndGlyphs">1.6</text>
<text x="620" y="239.3" font-size="10" textLength="23.5" lengthAdjust="spacingAndGlyphs">−3.8</text>
<text x="620" y="318.7" font-size="10" textLength="23.5" lengthAdjust="spacingAndGlyphs">−9.2</text>
<text x="620" y="397.9" font-size="10" textLength="29" lengthAdjust="spacingAndGlyphs">−14.6</text>
<text x="620" y="473" font-size="10" textLength="29.5" lengthAdjust="spacingAndGlyphs">−20.0</text>
</svg></body></html>
